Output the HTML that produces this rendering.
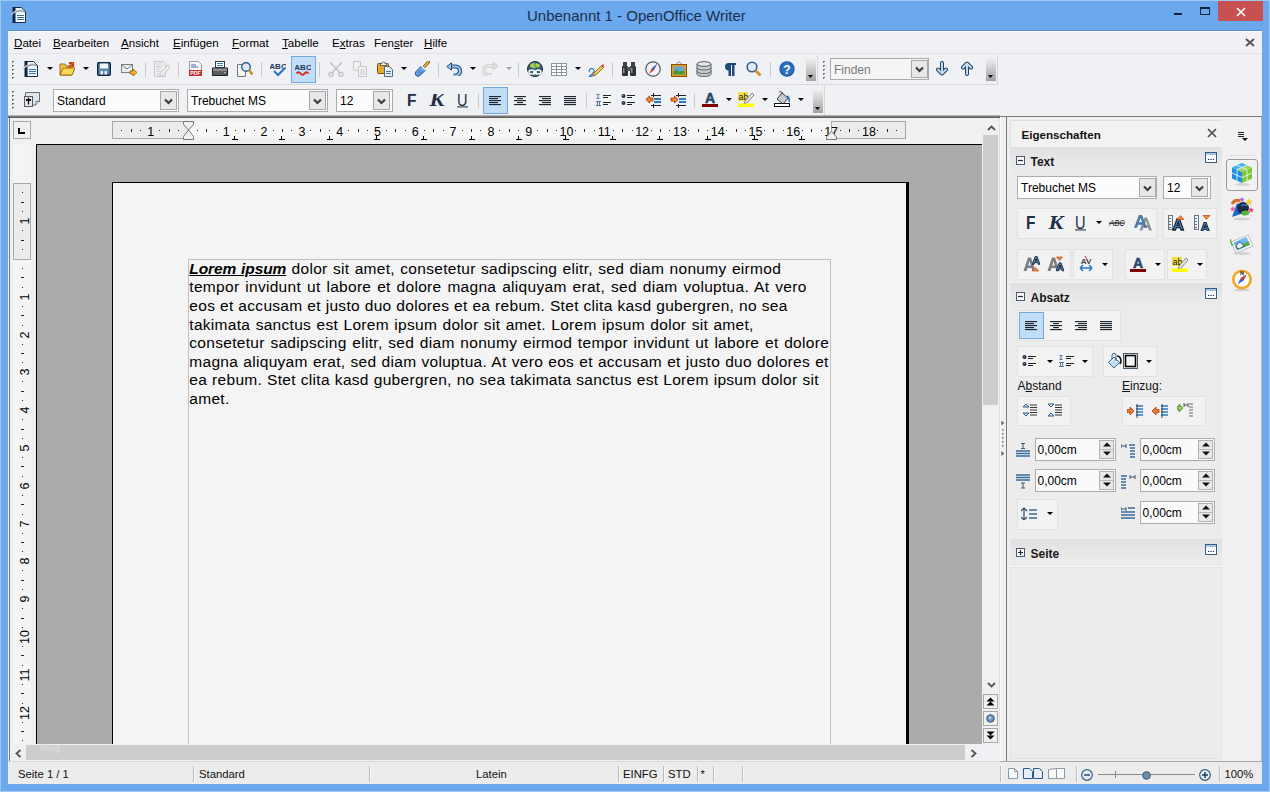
<!DOCTYPE html>
<html><head><meta charset="utf-8"><title>OpenOffice Writer</title>
<style>
*{margin:0;padding:0;box-sizing:border-box}
html,body{width:1270px;height:792px;overflow:hidden}
body{background:#6ba8ee;position:relative;font-family:"Liberation Sans",sans-serif;color:#000}
.a{position:absolute;display:block}
.t{position:absolute;white-space:pre;font-family:"Liberation Sans",sans-serif}
u{text-decoration:underline;text-underline-offset:1px}
</style></head><body>
<div class="a" style="left:0px;top:0px;width:1270px;height:1px;background:#9ec6f3"></div>
<div class="a" style="left:0px;top:0px;width:1px;height:792px;background:#9ec6f3"></div>
<div class="a" style="left:1269px;top:0px;width:1px;height:792px;background:#9ec6f3"></div>
<div class="a" style="left:0px;top:791px;width:1270px;height:1px;background:#9ec6f3"></div>
<div class="t" style="left:527px;top:8.10px;font-size:15px;line-height:15px;color:#1b2f4a">Unbenannt 1 - OpenOffice Writer</div>
<div class="a" style="left:1218px;top:1px;width:45px;height:20px;background:#c75050"></div>
<svg class="a" style="left:1236px;top:7px;" width="10" height="10" viewBox="0 0 10 10"><path d="M1 1L9 9M9 1L1 9" stroke="#fff" stroke-width="1.6"/></svg>
<div class="a" style="left:1174px;top:13px;width:8px;height:2px;background:#0f223d"></div>
<div class="a" style="left:1200px;top:7px;width:10px;height:8px;border:1px solid #0f223d;border-top-width:2px"></div>
<svg class="a" style="left:11px;top:7px;" width="16" height="16" viewBox="0 0 16 16"><path d="M3.5 0.5h7l4 4v11h-11z" fill="#f6f8fa" stroke="#1a2e48"/><rect x="1.5" y="0" width="3" height="16" fill="#0f2440"/><path d="M6 8.5h7M6 10.5h7M6 12.5h7" stroke="#3a70a8"/><path d="M0 8Q5 2 13 3.5" stroke="#c0cad4" stroke-width="1.4" fill="none"/><path d="M5 5Q9 2.5 14 5" stroke="#7a8a9a" stroke-width="1" fill="none"/></svg>
<div class="a" style="left:8px;top:31px;width:1254px;height:753px;background:#f0f1f4"></div>
<div class="a" style="left:8px;top:30px;width:1254px;height:1px;background:#5a8ed0"></div>
<div class="a" style="left:8px;top:31px;width:1254px;height:1px;background:#f8fbfe"></div>
<div class="t" style="left:14px;top:36.78px;font-size:11.6px;line-height:11.6px;color:#000"><u>D</u>atei</div>
<div class="t" style="left:53px;top:36.78px;font-size:11.6px;line-height:11.6px;color:#000"><u>B</u>earbeiten</div>
<div class="t" style="left:121px;top:36.78px;font-size:11.6px;line-height:11.6px;color:#000"><u>A</u>nsicht</div>
<div class="t" style="left:173px;top:36.78px;font-size:11.6px;line-height:11.6px;color:#000"><u>E</u>infügen</div>
<div class="t" style="left:232px;top:36.78px;font-size:11.6px;line-height:11.6px;color:#000"><u>F</u>ormat</div>
<div class="t" style="left:282px;top:36.78px;font-size:11.6px;line-height:11.6px;color:#000"><u>T</u>abelle</div>
<div class="t" style="left:332px;top:36.78px;font-size:11.6px;line-height:11.6px;color:#000">E<u>x</u>tras</div>
<div class="t" style="left:374px;top:36.78px;font-size:11.6px;line-height:11.6px;color:#000">Fen<u>s</u>ter</div>
<div class="t" style="left:424px;top:36.78px;font-size:11.6px;line-height:11.6px;color:#000"><u>H</u>ilfe</div>
<svg class="a" style="left:1245px;top:38px;" width="10" height="9" viewBox="0 0 10 9"><path d="M1 1L9 8M9 1L1 8" stroke="#505050" stroke-width="1.7"/></svg>
<div class="a" style="left:8px;top:53px;width:1254px;height:1px;background:#e2e3e6"></div>
<div class="a" style="left:8px;top:84px;width:990px;height:1px;background:#d6d7da"></div>
<div class="a" style="left:8px;top:115px;width:992px;height:1px;background:#b4b4b4"></div>
<div class="a" style="left:8px;top:116px;width:1254px;height:1px;background:#7a7a7a"></div>
<div class="a" style="left:8px;top:117px;width:992px;height:1px;background:#5e5e5e"></div>
<div class="a" style="left:12px;top:61px;width:2px;height:1px;background:#6a6a6a"></div>
<div class="a" style="left:12px;top:62px;width:1px;height:1px;background:#8a8a8a"></div>
<div class="a" style="left:12px;top:65px;width:2px;height:1px;background:#6a6a6a"></div>
<div class="a" style="left:12px;top:66px;width:1px;height:1px;background:#8a8a8a"></div>
<div class="a" style="left:12px;top:69px;width:2px;height:1px;background:#6a6a6a"></div>
<div class="a" style="left:12px;top:70px;width:1px;height:1px;background:#8a8a8a"></div>
<div class="a" style="left:12px;top:73px;width:2px;height:1px;background:#6a6a6a"></div>
<div class="a" style="left:12px;top:74px;width:1px;height:1px;background:#8a8a8a"></div>
<div class="a" style="left:12px;top:77px;width:2px;height:1px;background:#6a6a6a"></div>
<div class="a" style="left:12px;top:78px;width:1px;height:1px;background:#8a8a8a"></div>
<svg class="a" style="left:23px;top:61px;" width="16" height="16" viewBox="0 0 16 16"><path d="M3.5 0.5h7l4 4v11h-11z" fill="#f6f8fa" stroke="#1a2e48"/><rect x="1.5" y="0" width="3" height="16" fill="#0f2440"/><path d="M6 8.5h7M6 10.5h7M6 12.5h7" stroke="#3a70a8"/><path d="M0 8Q5 2 13 3.5" stroke="#c0cad4" stroke-width="1.4" fill="none"/><path d="M5 5Q9 2.5 14 5" stroke="#7a8a9a" stroke-width="1" fill="none"/></svg>
<svg class="a" style="left:47px;top:67px;" width="6" height="3" viewBox="0 0 6 3"><path d="M0 0h6L3 3z" fill="#000"/></svg>
<svg class="a" style="left:59px;top:61px;" width="16" height="16" viewBox="0 0 16 16"><path d="M1 3h5l1 2h6v9H1z" fill="#f2c84a" stroke="#a06a10" stroke-width="1"/><path d="M1 14l3-7h12l-3 7z" fill="#f8d65a" stroke="#a06a10" stroke-width="1"/><path d="M9 7l5-5M10 2h4v4" stroke="#c33d10" stroke-width="2.2" fill="none"/><path d="M9 7l5-5" stroke="#f07a30" stroke-width="1"/></svg>
<svg class="a" style="left:83px;top:67px;" width="6" height="3" viewBox="0 0 6 3"><path d="M0 0h6L3 3z" fill="#000"/></svg>
<svg class="a" style="left:97px;top:62px;" width="14" height="14" viewBox="0 0 14 14"><rect x="0.7" y="0.7" width="12.6" height="12.6" rx="1" fill="#5d86ad" stroke="#0f2a48" stroke-width="1.4"/><rect x="3" y="1.5" width="8" height="5" fill="#f4f6f8"/><rect x="3.5" y="9" width="2.5" height="3.5" fill="#e8eef4"/><rect x="7.5" y="9" width="2.5" height="3.5" fill="#e8eef4"/></svg>
<svg class="a" style="left:121px;top:64px;" width="16" height="12" viewBox="0 0 16 12"><rect x="0.5" y="0.5" width="11" height="8" fill="#e9edf1" stroke="#7a7f86"/><path d="M1 1l5 4 5-4" stroke="#7a7f86" fill="none"/><path d="M9 7h3V5l4 3.5-4 3.5v-2H9z" fill="#f5b82e" stroke="#8a5a00" stroke-width="0.8"/></svg>
<div class="a" style="left:145px;top:62px;width:1px;height:15px;background:#c9cacc"></div>
<svg class="a" style="left:154px;top:61px;" width="16" height="16" viewBox="0 0 16 16"><path d="M0.5 0.5h9l2 2v13h-11z" fill="#eeeeee" stroke="#c8c8c8"/><path d="M2 3h6M2 5.5h6M2 8h5M2 10.5h5M2 13h4" stroke="#d4d4d4"/><path d="M6 13l8-9 2 2-8 9H6z" fill="#f4f4f4" stroke="#c0c0c0"/></svg>
<div class="a" style="left:178px;top:62px;width:1px;height:15px;background:#c9cacc"></div>
<svg class="a" style="left:189px;top:61px;" width="13" height="15" viewBox="0 0 13 15"><path d="M0.5 0.5h9l3 3v11h-12z" fill="#f8f8f8" stroke="#9a9a9a"/><path d="M2 4h5M2 6h7" stroke="#3a6fb0"/><rect x="0" y="9" width="13" height="6" fill="#c8282a"/><text x="6.5" y="14" font-size="5.2" font-weight="bold" fill="#fff" text-anchor="middle" font-family="Liberation Sans">PDF</text></svg>
<svg class="a" style="left:212px;top:61px;" width="16" height="15" viewBox="0 0 16 15"><rect x="3.5" y="0.5" width="9" height="6" fill="#fff" stroke="#3a3a3a"/><path d="M5 2.5h6M5 4.5h6" stroke="#3a76b8"/><path d="M0.5 7h15v7.5H0.5z" fill="#5a5e62" stroke="#1e2022"/><rect x="1" y="7.5" width="14" height="2.5" fill="#8a8e92"/><rect x="12" y="11" width="2" height="1.2" fill="#7ad07a"/></svg>
<svg class="a" style="left:237px;top:61px;" width="16" height="16" viewBox="0 0 16 16"><path d="M0.5 3.5h8v12h-8z" fill="#f4f4f4" stroke="#787878"/><circle cx="9" cy="6" r="4.3" fill="#dbe9f7" stroke="#2d5d92" stroke-width="1.4"/><path d="M12 9l3.5 4.5" stroke="#c08a20" stroke-width="2.4"/></svg>
<div class="a" style="left:261px;top:62px;width:1px;height:15px;background:#c9cacc"></div>
<svg class="a" style="left:270px;top:61px;" width="16" height="16" viewBox="0 0 16 16"><text x="8" y="7.5" font-size="8" font-weight="bold" fill="#1e3a5f" text-anchor="middle" font-family="Liberation Sans">ABC</text><path d="M4 10l4 4 7-7" stroke="#2a78c8" stroke-width="2.2" fill="none"/></svg>
<div class="a" style="left:291px;top:56px;width:25px;height:27px;background:#c2def7;border:1px solid #72a8de"></div>
<svg class="a" style="left:295px;top:61px;" width="16" height="16" viewBox="0 0 16 16"><text x="8" y="9" font-size="8" font-weight="bold" fill="#1e3a5f" text-anchor="middle" font-family="Liberation Sans">ABC</text><path d="M1.5 12.5q2-2.5 4 0t4 0 4 0" stroke="#d02a1a" stroke-width="2" fill="none"/></svg>
<div class="a" style="left:319px;top:62px;width:1px;height:15px;background:#c9cacc"></div>
<svg class="a" style="left:328px;top:61px;" width="16" height="16" viewBox="0 0 16 16"><path d="M2 1l10 11M14 1L4 12" stroke="#c4c4c4" stroke-width="1.5"/><circle cx="3" cy="13.5" r="2" fill="none" stroke="#c4c4c4" stroke-width="1.4"/><circle cx="13" cy="13.5" r="2" fill="none" stroke="#c4c4c4" stroke-width="1.4"/></svg>
<svg class="a" style="left:353px;top:61px;" width="16" height="16" viewBox="0 0 16 16"><path d="M0.5 0.5h7v9h-7z" fill="#f0f0f0" stroke="#c8c8c8"/><path d="M5.5 5.5h8v10h-8z" fill="#f0f0f0" stroke="#c8c8c8"/><path d="M7 9h5M7 11h5M7 13h5" stroke="#cfcfcf"/></svg>
<svg class="a" style="left:377px;top:61px;" width="16" height="16" viewBox="0 0 16 16"><rect x="0.5" y="2.5" width="11" height="10" rx="1" fill="#e8a830" stroke="#7a5010"/><path d="M3.5 4.5v-2h1.5a1.5 1.5 0 0 1 3 0h1.5v2z" fill="#f4f4f4" stroke="#555" stroke-width="0.9"/><path d="M7.5 5.5h5l3 3v7h-8z" fill="#e8f0f8" stroke="#5a6a7a"/><path d="M9 10.5h5M9 12.5h5" stroke="#3a78c0"/></svg>
<svg class="a" style="left:401px;top:67px;" width="6" height="3" viewBox="0 0 6 3"><path d="M0 0h6L3 3z" fill="#000"/></svg>
<svg class="a" style="left:414px;top:61px;" width="16" height="16" viewBox="0 0 16 16"><path d="M10 6l4.5-5" stroke="#8a5a10" stroke-width="3.2" stroke-linecap="round"/><path d="M10 6l4.5-5" stroke="#e8b040" stroke-width="1.6" stroke-linecap="round"/><path d="M2 10.5l5.5-5.5 4 4-5.5 5.5q-2 1.5-4 0q-1.5-2 0-4z" fill="#6aa8e8" stroke="#1a4a88" stroke-width="1"/><path d="M7.5 5l4 4" stroke="#f4f8fc" stroke-width="1.4"/><path d="M3.5 12l3-3M5 13.5l3-3" stroke="#2a6ab8" stroke-width="0.9"/></svg>
<div class="a" style="left:438px;top:62px;width:1px;height:15px;background:#c9cacc"></div>
<svg class="a" style="left:446px;top:62px;" width="16" height="14" viewBox="0 0 16 14"><path d="M4.5 4.5h5a4.5 4.5 0 0 1 0 9h-2" fill="none" stroke="#1e4f86" stroke-width="4.2" stroke-linejoin="round"/><path d="M4.5 4.5h5a4.5 4.5 0 0 1 0 9h-2" fill="none" stroke="#9cc4ec" stroke-width="2.2"/><path d="M0.8 4.5L5.5 0.8v7.4z" fill="#9cc4ec" stroke="#1e4f86" stroke-width="1" stroke-linejoin="round"/></svg>
<svg class="a" style="left:470px;top:67px;" width="6" height="3" viewBox="0 0 6 3"><path d="M0 0h6L3 3z" fill="#000"/></svg>
<svg class="a" style="left:482px;top:62px;" width="16" height="14" viewBox="0 0 16 14"><path d="M11 4H6a4.5 4.5 0 0 0 0 9h4" fill="none" stroke="#c8c8c8" stroke-width="3.4"/><path d="M11 4H6a4.5 4.5 0 0 0 0 9h4" fill="none" stroke="#efefef" stroke-width="1.6"/><path d="M16 4l-5-4v8z" fill="#e0e0e0" stroke="#c4c4c4" stroke-width="0.8"/></svg>
<svg class="a" style="left:506px;top:67px;" width="6" height="3" viewBox="0 0 6 3"><path d="M0 0h6L3 3z" fill="#a0a0a0"/></svg>
<div class="a" style="left:518px;top:62px;width:1px;height:15px;background:#c9cacc"></div>
<svg class="a" style="left:527px;top:61px;" width="16" height="16" viewBox="0 0 16 16"><circle cx="8" cy="8" r="7.5" fill="#3a6070" stroke="#1a2a38" stroke-width="1"/><path d="M2.5 5q1.5-3 4-3.5l1 2 2.5-1.5 3 2-1 2.5-3-.5-2 1.5-2.5-1z" fill="#a8d040"/><path d="M10 8.5l3.5.5-.5 1.5z" fill="#a8d040"/><path d="M8 1v14" stroke="#4a90c0" stroke-width="0.8"/><rect x="2" y="9.3" width="5.5" height="3.8" rx="1.9" fill="none" stroke="#fff" stroke-width="1.5"/><rect x="8.5" y="9.3" width="5.5" height="3.8" rx="1.9" fill="none" stroke="#fff" stroke-width="1.5"/><path d="M6 11.2h4" stroke="#fff" stroke-width="1.2"/></svg>
<svg class="a" style="left:551px;top:63px;" width="16" height="13" viewBox="0 0 16 13"><rect x="0.5" y="0.5" width="15" height="12" fill="#fff" stroke="#8a96a4"/><path d="M0.5 3.5h15M0.5 6.5h15M0.5 9.5h15M5.5 0.5v12M10.5 0.5v12" stroke="#8a96a4"/></svg>
<svg class="a" style="left:575px;top:67px;" width="6" height="3" viewBox="0 0 6 3"><path d="M0 0h6L3 3z" fill="#000"/></svg>
<svg class="a" style="left:588px;top:61px;" width="16" height="16" viewBox="0 0 16 16"><path d="M1 11q1-5 4-3t-2 6 5-1" fill="none" stroke="#3a7ad0" stroke-width="1.3"/><path d="M6 12l8-8 2 2-8 8-3 1z" fill="#f2c440" stroke="#8a6010" stroke-width="0.8"/><path d="M13 5l2-2 2 2-2 2z" fill="#e05a5a"/></svg>
<div class="a" style="left:612px;top:62px;width:1px;height:15px;background:#c9cacc"></div>
<svg class="a" style="left:621px;top:61px;" width="16" height="16" viewBox="0 0 16 16"><rect x="1" y="5" width="6" height="10" rx="1" fill="#2e3236"/><rect x="9" y="5" width="6" height="10" rx="1" fill="#2e3236"/><rect x="2" y="1" width="4" height="5" fill="#3e4246"/><rect x="10" y="1" width="4" height="5" fill="#3e4246"/><rect x="6" y="6" width="4" height="4" fill="#555"/><rect x="2" y="7" width="1.5" height="5" fill="#8a9096"/><rect x="10" y="7" width="1.5" height="5" fill="#8a9096"/></svg>
<svg class="a" style="left:645px;top:61px;" width="16" height="16" viewBox="0 0 16 16"><circle cx="8" cy="8" r="7.2" fill="#f4f4f4" stroke="#4d5a66" stroke-width="1.2"/><path d="M12 3L9 9 4 13 7 7z" fill="#d83030"/><path d="M12 3L9 9 7 7z" fill="#3a7ad0"/></svg>
<svg class="a" style="left:671px;top:61px;" width="16" height="16" viewBox="0 0 16 16"><rect x="0.5" y="3.5" width="15" height="12" fill="#e89a20" stroke="#8a5200"/><rect x="2.5" y="5.5" width="11" height="8" fill="#5fa8e0"/><path d="M2.5 13.5v-3l3-2 3 2 5-1v4z" fill="#4a9a30"/><path d="M5 3.5L8 0.5l3 3" fill="none" stroke="#888"/></svg>
<svg class="a" style="left:696px;top:61px;" width="16" height="16" viewBox="0 0 16 16"><path d="M1 3v10c0 1.6 3.1 2.5 7 2.5s7-.9 7-2.5V3" fill="#c8ccd0" stroke="#5a5e62"/><ellipse cx="8" cy="3" rx="7" ry="2.3" fill="#e6e8ea" stroke="#5a5e62"/><path d="M1 6.5c0 1.6 3.1 2.5 7 2.5s7-.9 7-2.5M1 10c0 1.6 3.1 2.5 7 2.5s7-.9 7-2.5" fill="none" stroke="#5a5e62"/></svg>
<svg class="a" style="left:722px;top:62px;" width="16" height="14" viewBox="0 0 16 14"><path d="M6 1h8v2h-1.5v11h-2.5V3H9v11H6.5V8.5A3.8 3.8 0 0 1 6 1z" fill="#1f4a78"/></svg>
<svg class="a" style="left:746px;top:61px;" width="16" height="16" viewBox="0 0 16 16"><circle cx="6" cy="6" r="4.8" fill="#e2eef9" stroke="#2f5f94" stroke-width="1.6"/><path d="M9.5 9.5l5 5" stroke="#d09020" stroke-width="2.6"/></svg>
<div class="a" style="left:770px;top:62px;width:1px;height:15px;background:#c9cacc"></div>
<svg class="a" style="left:779px;top:61px;" width="16" height="16" viewBox="0 0 16 16"><circle cx="8" cy="8" r="7.7" fill="#1e5aa8"/><circle cx="8" cy="8" r="6.5" fill="#2f6fc0"/><text x="8" y="12.5" font-size="12" font-weight="bold" fill="#fff" text-anchor="middle" font-family="Liberation Sans">?</text></svg>
<div class="a" style="left:806px;top:57px;width:10px;height:24px;background:linear-gradient(#f4f4f4,#a2a2a2)"></div>
<svg class="a" style="left:808px;top:75px;" width="5" height="3" viewBox="0 0 5 3"><path d="M0 0h5L2.5 3z" fill="#000"/></svg>
<div class="a" style="left:817px;top:55px;width:1px;height:30px;background:#d6d6d6"></div>
<div class="a" style="left:823px;top:61px;width:2px;height:1px;background:#6a6a6a"></div>
<div class="a" style="left:823px;top:62px;width:1px;height:1px;background:#8a8a8a"></div>
<div class="a" style="left:823px;top:65px;width:2px;height:1px;background:#6a6a6a"></div>
<div class="a" style="left:823px;top:66px;width:1px;height:1px;background:#8a8a8a"></div>
<div class="a" style="left:823px;top:69px;width:2px;height:1px;background:#6a6a6a"></div>
<div class="a" style="left:823px;top:70px;width:1px;height:1px;background:#8a8a8a"></div>
<div class="a" style="left:823px;top:73px;width:2px;height:1px;background:#6a6a6a"></div>
<div class="a" style="left:823px;top:74px;width:1px;height:1px;background:#8a8a8a"></div>
<div class="a" style="left:823px;top:77px;width:2px;height:1px;background:#6a6a6a"></div>
<div class="a" style="left:823px;top:78px;width:1px;height:1px;background:#8a8a8a"></div>
<div class="a" style="left:830px;top:58px;width:99px;height:22px;background:#f5f5f5;border:1px solid #acacac"></div>
<div class="t" style="left:834px;top:64.24px;font-size:12px;line-height:12px;color:#7a7a7a">Finden</div>
<div class="a" style="left:911px;top:60px;width:17px;height:18px;background:#e8e8e8;border:1px solid #a9a9a9"></div>
<svg class="a" style="left:915px;top:66px;" width="9" height="7" viewBox="0 0 9 7"><path d="M1 1.5l3.5 3.5 3.5-3.5" stroke="#3c3c3c" stroke-width="2.2" fill="none"/></svg>
<svg class="a" style="left:936px;top:61px;" width="12" height="15" viewBox="0 0 12 15"><path d="M6 2v10.5M2 8.5l4 4 4-4" stroke="#26405e" stroke-width="4" stroke-linecap="round" stroke-linejoin="round" fill="none"/><path d="M6 2v10.5M2 8.5l4 4 4-4" stroke="#c4dcf2" stroke-width="2" stroke-linecap="round" stroke-linejoin="round" fill="none"/></svg>
<svg class="a" style="left:961px;top:61px;" width="12" height="15" viewBox="0 0 12 15"><path d="M6 13V2.5M2 6.5l4-4 4 4" stroke="#26405e" stroke-width="4" stroke-linecap="round" stroke-linejoin="round" fill="none"/><path d="M6 13V2.5M2 6.5l4-4 4 4" stroke="#c4dcf2" stroke-width="2" stroke-linecap="round" stroke-linejoin="round" fill="none"/></svg>
<div class="a" style="left:986px;top:57px;width:10px;height:24px;background:linear-gradient(#f4f4f4,#a2a2a2)"></div>
<svg class="a" style="left:988px;top:75px;" width="5" height="3" viewBox="0 0 5 3"><path d="M0 0h5L2.5 3z" fill="#000"/></svg>
<div class="a" style="left:997px;top:55px;width:1px;height:30px;background:#d6d6d6"></div>
<div class="a" style="left:12px;top:91px;width:2px;height:1px;background:#6a6a6a"></div>
<div class="a" style="left:12px;top:92px;width:1px;height:1px;background:#8a8a8a"></div>
<div class="a" style="left:12px;top:95px;width:2px;height:1px;background:#6a6a6a"></div>
<div class="a" style="left:12px;top:96px;width:1px;height:1px;background:#8a8a8a"></div>
<div class="a" style="left:12px;top:99px;width:2px;height:1px;background:#6a6a6a"></div>
<div class="a" style="left:12px;top:100px;width:1px;height:1px;background:#8a8a8a"></div>
<div class="a" style="left:12px;top:103px;width:2px;height:1px;background:#6a6a6a"></div>
<div class="a" style="left:12px;top:104px;width:1px;height:1px;background:#8a8a8a"></div>
<div class="a" style="left:12px;top:107px;width:2px;height:1px;background:#6a6a6a"></div>
<div class="a" style="left:12px;top:108px;width:1px;height:1px;background:#8a8a8a"></div>
<svg class="a" style="left:24px;top:92px;" width="17" height="16" viewBox="0 0 17 16"><path d="M1.5 0.5h14v9l-3.5 3.5H1.5z" fill="#dde5ee" stroke="#6a6e72"/><path d="M12 13v-3.5h3.5" fill="#fafafa" stroke="#6a6e72"/><rect x="0.5" y="4.5" width="8" height="10" fill="#e4e6e8" stroke="#5a5e62"/><path d="M4.5 5.5v7" stroke="#111" stroke-width="1.3"/><rect x="2" y="7" width="5" height="2" fill="#111"/></svg>
<div class="a" style="left:53px;top:89px;width:126px;height:23px;background:#fcfcfc;border:1px solid #acacac"></div>
<div class="t" style="left:57px;top:95.24px;font-size:12px;line-height:12px;color:#000">Standard</div>
<div class="a" style="left:160px;top:91px;width:17px;height:19px;background:#e8e8e8;border:1px solid #a9a9a9"></div>
<svg class="a" style="left:164px;top:98px;" width="9" height="7" viewBox="0 0 9 7"><path d="M1 1.5l3.5 3.5 3.5-3.5" stroke="#3c3c3c" stroke-width="2.2" fill="none"/></svg>
<div class="a" style="left:187px;top:89px;width:141px;height:23px;background:#fcfcfc;border:1px solid #acacac"></div>
<div class="t" style="left:191px;top:95.24px;font-size:12px;line-height:12px;color:#000">Trebuchet MS</div>
<div class="a" style="left:309px;top:91px;width:17px;height:19px;background:#e8e8e8;border:1px solid #a9a9a9"></div>
<svg class="a" style="left:313px;top:98px;" width="9" height="7" viewBox="0 0 9 7"><path d="M1 1.5l3.5 3.5 3.5-3.5" stroke="#3c3c3c" stroke-width="2.2" fill="none"/></svg>
<div class="a" style="left:336px;top:89px;width:57px;height:23px;background:#fcfcfc;border:1px solid #acacac"></div>
<div class="t" style="left:340px;top:95.24px;font-size:12px;line-height:12px;color:#000">12</div>
<div class="a" style="left:373px;top:91px;width:17px;height:19px;background:#e8e8e8;border:1px solid #a9a9a9"></div>
<svg class="a" style="left:377px;top:98px;" width="9" height="7" viewBox="0 0 9 7"><path d="M1 1.5l3.5 3.5 3.5-3.5" stroke="#3c3c3c" stroke-width="2.2" fill="none"/></svg>
<svg class="a" style="left:407px;top:94px;" width="12" height="15" viewBox="0 0 12 15"><text x="0" y="12" font-size="16.8" font-weight="bold" fill="#1e3048" font-family="Liberation Sans" textLength="9.5" lengthAdjust="spacingAndGlyphs">F</text></svg>
<svg class="a" style="left:429px;top:94px;" width="17" height="15" viewBox="0 0 17 15"><text x="0.5" y="12" font-size="18.3" font-weight="bold" font-style="italic" fill="#1e3048" font-family="Liberation Serif" textLength="15" lengthAdjust="spacingAndGlyphs">K</text></svg>
<svg class="a" style="left:457px;top:94px;" width="12" height="15" viewBox="0 0 12 15"><text x="0" y="12" font-size="16.8" fill="#1e3048" font-family="Liberation Sans" textLength="10.5" lengthAdjust="spacingAndGlyphs">U</text><rect x="0" y="12.3" width="11" height="1.2" fill="#3a4a5a"/></svg>
<div class="a" style="left:478px;top:93px;width:1px;height:15px;background:#c9cacc"></div>
<div class="a" style="left:483px;top:87px;width:25px;height:27px;background:#c2def7;border:1px solid #72a8de"></div>
<svg class="a" style="left:489px;top:96px;" width="12" height="10" viewBox="0 0 12 10"><rect x="0" y="0" width="12" height="1.15" fill="#1e2630"/><rect x="0" y="2" width="9" height="1.15" fill="#1e2630"/><rect x="0" y="4" width="12" height="1.15" fill="#1e2630"/><rect x="0" y="6" width="9" height="1.15" fill="#1e2630"/><rect x="0" y="8" width="12" height="1.15" fill="#1e2630"/></svg>
<svg class="a" style="left:514px;top:96px;" width="12" height="10" viewBox="0 0 12 10"><rect x="0" y="0" width="12" height="1.15" fill="#1e2630"/><rect x="3" y="2" width="6" height="1.15" fill="#1e2630"/><rect x="0" y="4" width="12" height="1.15" fill="#1e2630"/><rect x="3" y="6" width="6" height="1.15" fill="#1e2630"/><rect x="0" y="8" width="12" height="1.15" fill="#1e2630"/></svg>
<svg class="a" style="left:539px;top:96px;" width="12" height="10" viewBox="0 0 12 10"><rect x="0" y="0" width="12" height="1.15" fill="#1e2630"/><rect x="3" y="2" width="9" height="1.15" fill="#1e2630"/><rect x="0" y="4" width="12" height="1.15" fill="#1e2630"/><rect x="3" y="6" width="9" height="1.15" fill="#1e2630"/><rect x="0" y="8" width="12" height="1.15" fill="#1e2630"/></svg>
<svg class="a" style="left:564px;top:96px;" width="12" height="10" viewBox="0 0 12 10"><rect x="0" y="0" width="12" height="1.15" fill="#1e2630"/><rect x="0" y="2" width="12" height="1.15" fill="#1e2630"/><rect x="0" y="4" width="12" height="1.15" fill="#1e2630"/><rect x="0" y="6" width="12" height="1.15" fill="#1e2630"/><rect x="0" y="8" width="12" height="1.15" fill="#1e2630"/></svg>
<div class="a" style="left:586px;top:93px;width:1px;height:15px;background:#c9cacc"></div>
<svg class="a" style="left:595px;top:93px;" width="16" height="13" viewBox="0 0 16 13"><path d="M1.5 1.5h3M3 1.5v3.5M1.5 5.5h3" stroke="#56789a" stroke-width="1" fill="none"/><path d="M1 8.5h5M2.5 8.5v3.5M4.5 8.5v3.5M1 12.5h5" stroke="#56789a" stroke-width="1" fill="none"/><path d="M8 2.5h8M8 4.5h5M8 9.5h8M8 11.5h5" stroke="#202020" stroke-width="1"/></svg>
<svg class="a" style="left:621px;top:93px;" width="16" height="13" viewBox="0 0 16 13"><circle cx="2.5" cy="3" r="2" fill="#1e3048"/><circle cx="2.5" cy="10" r="2" fill="#1e3048"/><circle cx="2.2" cy="2.6" r="0.7" fill="#8aa8c8"/><circle cx="2.2" cy="9.6" r="0.7" fill="#8aa8c8"/><path d="M6 2.5h8M6 4.5h5M6 9.5h8M6 11.5h5" stroke="#202020" stroke-width="1"/></svg>
<svg class="a" style="left:645px;top:92px;" width="16" height="16" viewBox="0 0 16 16"><path d="M0.8 7.5l3.7-3.5v2h3.5v3H4.5v2z" fill="#f08a3a" stroke="#a8400a" stroke-width="0.9" stroke-linejoin="round"/><path d="M6 3.5h10M6 13.5h10M8.5 1v4M8.5 12v4" stroke="#202020" stroke-width="1"/><rect x="9" y="6" width="7" height="2" fill="#2a7ac8"/><rect x="9" y="9" width="7" height="2" fill="#2a7ac8"/></svg>
<svg class="a" style="left:670px;top:92px;" width="16" height="16" viewBox="0 0 16 16"><path d="M8.2 7.5L4.5 4v2H1v3h3.5v2z" fill="#f08a3a" stroke="#a8400a" stroke-width="0.9" stroke-linejoin="round"/><path d="M6 3.5h10M6 13.5h10M8.5 1v4M8.5 12v4" stroke="#202020" stroke-width="1"/><rect x="9" y="6" width="7" height="2" fill="#2a7ac8"/><rect x="9" y="9" width="7" height="2" fill="#2a7ac8"/></svg>
<div class="a" style="left:694px;top:93px;width:1px;height:15px;background:#c9cacc"></div>
<svg class="a" style="left:702px;top:91px;" width="16" height="16" viewBox="0 0 16 16"><text x="8" y="12" font-size="14" font-weight="bold" fill="#2a4e78" text-anchor="middle" font-family="Liberation Sans" stroke="#1a3050" stroke-width="0.5">A</text><rect x="0" y="13" width="16" height="3.2" fill="#800000"/></svg>
<svg class="a" style="left:726px;top:98px;" width="6" height="3" viewBox="0 0 6 3"><path d="M0 0h6L3 3z" fill="#000"/></svg>
<svg class="a" style="left:738px;top:91px;" width="16" height="16" viewBox="0 0 16 16"><rect x="0" y="1" width="10" height="9" fill="#f2e040"/><text x="0.5" y="9" font-size="9" fill="#202020" font-family="Liberation Sans">ab</text><path d="M7 10l7-8 2 2-7 8-3 1z" fill="#e8e8e8" stroke="#6a6a6a" stroke-width="0.8"/><rect x="0" y="12.5" width="16" height="3.5" fill="#ffff00"/></svg>
<svg class="a" style="left:762px;top:98px;" width="6" height="3" viewBox="0 0 6 3"><path d="M0 0h6L3 3z" fill="#000"/></svg>
<svg class="a" style="left:774px;top:91px;" width="16" height="16" viewBox="0 0 16 16"><path d="M3 8l5-6 6 5-5 6z" fill="#c8ccd0" stroke="#3a3e42" stroke-width="1"/><path d="M5 1q3-1 4 2" fill="none" stroke="#555" stroke-width="1.2"/><path d="M13 5q3 2 2 6" stroke="#2a6ac0" stroke-width="1.6" fill="none"/><rect x="0.5" y="12.5" width="15" height="3" fill="#fff" stroke="#111"/></svg>
<svg class="a" style="left:798px;top:98px;" width="6" height="3" viewBox="0 0 6 3"><path d="M0 0h6L3 3z" fill="#000"/></svg>
<div class="a" style="left:813px;top:88px;width:10px;height:25px;background:linear-gradient(#f4f4f4,#a2a2a2)"></div>
<svg class="a" style="left:815px;top:107px;" width="5" height="3" viewBox="0 0 5 3"><path d="M0 0h5L2.5 3z" fill="#000"/></svg>
<div class="a" style="left:824px;top:86px;width:1px;height:29px;background:#d6d6d6"></div>
<div class="a" style="left:8px;top:118px;width:992px;height:26px;background:#f0f0f0"></div>
<div class="a" style="left:9px;top:118px;width:1px;height:643px;background:#777"></div>
<div class="a" style="left:10px;top:118px;width:26px;height:627px;background:#f0f0f0"></div>
<div class="a" style="left:36px;top:144px;width:946px;height:600px;background:#ababab"></div>
<div class="a" style="left:36px;top:144px;width:946px;height:1px;background:#000"></div>
<div class="a" style="left:36px;top:144px;width:1px;height:600px;background:#000"></div>
<div class="a" style="left:112px;top:182px;width:797px;height:562px;background:#f4f4f4;border-left:1px solid #000;border-top:1px solid #000;border-right:3px solid #000"></div>
<div class="a" style="left:188px;top:259px;width:643px;height:486px;border:1px solid #c0c0c0;border-bottom:none"></div>
<div class="a" style="left:13px;top:121px;width:18px;height:18px;background:#f0f0f0;border:1px solid #a8a8a8"></div>
<div class="a" style="left:18px;top:128px;width:2px;height:6px;background:#000"></div>
<div class="a" style="left:18px;top:132px;width:7px;height:2px;background:#000"></div>
<div class="a" style="left:112px;top:121px;width:77px;height:18px;background:#ebebeb;border:1px solid #a8a8a8"></div>
<div class="a" style="left:188px;top:122px;width:643px;height:16px;background:#f6f6f6"></div>
<div class="a" style="left:831px;top:121px;width:75px;height:18px;background:#ebebeb;border:1px solid #a8a8a8"></div>
<div class="a" style="left:121px;top:130px;width:1px;height:1px;background:#222"></div>
<div class="a" style="left:131px;top:129px;width:1px;height:3px;background:#222"></div>
<div class="a" style="left:140px;top:130px;width:1px;height:1px;background:#222"></div>
<div class="t" style="left:140.7px;top:125.6px;width:20px;text-align:center;font-size:12.5px;line-height:12px;color:#000">1</div>
<div class="a" style="left:159px;top:130px;width:1px;height:1px;background:#222"></div>
<div class="a" style="left:169px;top:129px;width:1px;height:3px;background:#222"></div>
<div class="a" style="left:178px;top:130px;width:1px;height:1px;background:#222"></div>
<div class="a" style="left:197px;top:130px;width:1px;height:1px;background:#222"></div>
<div class="a" style="left:206px;top:129px;width:1px;height:3px;background:#222"></div>
<div class="a" style="left:216px;top:130px;width:1px;height:1px;background:#222"></div>
<div class="t" style="left:216.3px;top:125.6px;width:20px;text-align:center;font-size:12.5px;line-height:12px;color:#000">1</div>
<div class="a" style="left:235px;top:130px;width:1px;height:1px;background:#222"></div>
<div class="a" style="left:244px;top:129px;width:1px;height:3px;background:#222"></div>
<div class="a" style="left:254px;top:130px;width:1px;height:1px;background:#222"></div>
<div class="t" style="left:254.1px;top:125.6px;width:20px;text-align:center;font-size:12.5px;line-height:12px;color:#000">2</div>
<div class="a" style="left:273px;top:130px;width:1px;height:1px;background:#222"></div>
<div class="a" style="left:282px;top:129px;width:1px;height:3px;background:#222"></div>
<div class="a" style="left:291px;top:130px;width:1px;height:1px;background:#222"></div>
<div class="t" style="left:291.9px;top:125.6px;width:20px;text-align:center;font-size:12.5px;line-height:12px;color:#000">3</div>
<div class="a" style="left:310px;top:130px;width:1px;height:1px;background:#222"></div>
<div class="a" style="left:320px;top:129px;width:1px;height:3px;background:#222"></div>
<div class="a" style="left:329px;top:130px;width:1px;height:1px;background:#222"></div>
<div class="t" style="left:329.7px;top:125.6px;width:20px;text-align:center;font-size:12.5px;line-height:12px;color:#000">4</div>
<div class="a" style="left:348px;top:130px;width:1px;height:1px;background:#222"></div>
<div class="a" style="left:358px;top:129px;width:1px;height:3px;background:#222"></div>
<div class="a" style="left:367px;top:130px;width:1px;height:1px;background:#222"></div>
<div class="t" style="left:367.5px;top:125.6px;width:20px;text-align:center;font-size:12.5px;line-height:12px;color:#000">5</div>
<div class="a" style="left:386px;top:130px;width:1px;height:1px;background:#222"></div>
<div class="a" style="left:395px;top:129px;width:1px;height:3px;background:#222"></div>
<div class="a" style="left:405px;top:130px;width:1px;height:1px;background:#222"></div>
<div class="t" style="left:405.3px;top:125.6px;width:20px;text-align:center;font-size:12.5px;line-height:12px;color:#000">6</div>
<div class="a" style="left:424px;top:130px;width:1px;height:1px;background:#222"></div>
<div class="a" style="left:433px;top:129px;width:1px;height:3px;background:#222"></div>
<div class="a" style="left:443px;top:130px;width:1px;height:1px;background:#222"></div>
<div class="t" style="left:443.1px;top:125.6px;width:20px;text-align:center;font-size:12.5px;line-height:12px;color:#000">7</div>
<div class="a" style="left:462px;top:130px;width:1px;height:1px;background:#222"></div>
<div class="a" style="left:471px;top:129px;width:1px;height:3px;background:#222"></div>
<div class="a" style="left:480px;top:130px;width:1px;height:1px;background:#222"></div>
<div class="t" style="left:480.9px;top:125.6px;width:20px;text-align:center;font-size:12.5px;line-height:12px;color:#000">8</div>
<div class="a" style="left:499px;top:130px;width:1px;height:1px;background:#222"></div>
<div class="a" style="left:509px;top:129px;width:1px;height:3px;background:#222"></div>
<div class="a" style="left:518px;top:130px;width:1px;height:1px;background:#222"></div>
<div class="t" style="left:518.7px;top:125.6px;width:20px;text-align:center;font-size:12.5px;line-height:12px;color:#000">9</div>
<div class="a" style="left:537px;top:130px;width:1px;height:1px;background:#222"></div>
<div class="a" style="left:547px;top:129px;width:1px;height:3px;background:#222"></div>
<div class="a" style="left:556px;top:130px;width:1px;height:1px;background:#222"></div>
<div class="t" style="left:556.5px;top:125.6px;width:20px;text-align:center;font-size:12.5px;line-height:12px;color:#000">10</div>
<div class="a" style="left:575px;top:130px;width:1px;height:1px;background:#222"></div>
<div class="a" style="left:584px;top:129px;width:1px;height:3px;background:#222"></div>
<div class="a" style="left:594px;top:130px;width:1px;height:1px;background:#222"></div>
<div class="t" style="left:594.3px;top:125.6px;width:20px;text-align:center;font-size:12.5px;line-height:12px;color:#000">11</div>
<div class="a" style="left:613px;top:130px;width:1px;height:1px;background:#222"></div>
<div class="a" style="left:622px;top:129px;width:1px;height:3px;background:#222"></div>
<div class="a" style="left:632px;top:130px;width:1px;height:1px;background:#222"></div>
<div class="t" style="left:632.1px;top:125.6px;width:20px;text-align:center;font-size:12.5px;line-height:12px;color:#000">12</div>
<div class="a" style="left:651px;top:130px;width:1px;height:1px;background:#222"></div>
<div class="a" style="left:660px;top:129px;width:1px;height:3px;background:#222"></div>
<div class="a" style="left:669px;top:130px;width:1px;height:1px;background:#222"></div>
<div class="t" style="left:669.9px;top:125.6px;width:20px;text-align:center;font-size:12.5px;line-height:12px;color:#000">13</div>
<div class="a" style="left:688px;top:130px;width:1px;height:1px;background:#222"></div>
<div class="a" style="left:698px;top:129px;width:1px;height:3px;background:#222"></div>
<div class="a" style="left:707px;top:130px;width:1px;height:1px;background:#222"></div>
<div class="t" style="left:707.7px;top:125.6px;width:20px;text-align:center;font-size:12.5px;line-height:12px;color:#000">14</div>
<div class="a" style="left:726px;top:130px;width:1px;height:1px;background:#222"></div>
<div class="a" style="left:736px;top:129px;width:1px;height:3px;background:#222"></div>
<div class="a" style="left:745px;top:130px;width:1px;height:1px;background:#222"></div>
<div class="t" style="left:745.5px;top:125.6px;width:20px;text-align:center;font-size:12.5px;line-height:12px;color:#000">15</div>
<div class="a" style="left:764px;top:130px;width:1px;height:1px;background:#222"></div>
<div class="a" style="left:773px;top:129px;width:1px;height:3px;background:#222"></div>
<div class="a" style="left:783px;top:130px;width:1px;height:1px;background:#222"></div>
<div class="t" style="left:783.3px;top:125.6px;width:20px;text-align:center;font-size:12.5px;line-height:12px;color:#000">16</div>
<div class="a" style="left:802px;top:130px;width:1px;height:1px;background:#222"></div>
<div class="a" style="left:811px;top:129px;width:1px;height:3px;background:#222"></div>
<div class="a" style="left:821px;top:130px;width:1px;height:1px;background:#222"></div>
<div class="t" style="left:821.1px;top:125.6px;width:20px;text-align:center;font-size:12.5px;line-height:12px;color:#000">17</div>
<div class="a" style="left:840px;top:130px;width:1px;height:1px;background:#222"></div>
<div class="a" style="left:849px;top:129px;width:1px;height:3px;background:#222"></div>
<div class="a" style="left:858px;top:130px;width:1px;height:1px;background:#222"></div>
<div class="t" style="left:858.9px;top:125.6px;width:20px;text-align:center;font-size:12.5px;line-height:12px;color:#000">18</div>
<div class="a" style="left:877px;top:130px;width:1px;height:1px;background:#222"></div>
<div class="a" style="left:887px;top:129px;width:1px;height:3px;background:#222"></div>
<div class="a" style="left:896px;top:130px;width:1px;height:1px;background:#222"></div>
<div class="a" style="left:232px;top:139px;width:6px;height:1px;background:#000"></div>
<div class="a" style="left:234px;top:136px;width:1px;height:3px;background:#000"></div>
<div class="a" style="left:279px;top:139px;width:6px;height:1px;background:#000"></div>
<div class="a" style="left:281px;top:136px;width:1px;height:3px;background:#000"></div>
<div class="a" style="left:327px;top:139px;width:6px;height:1px;background:#000"></div>
<div class="a" style="left:329px;top:136px;width:1px;height:3px;background:#000"></div>
<div class="a" style="left:374px;top:139px;width:6px;height:1px;background:#000"></div>
<div class="a" style="left:376px;top:136px;width:1px;height:3px;background:#000"></div>
<div class="a" style="left:421px;top:139px;width:6px;height:1px;background:#000"></div>
<div class="a" style="left:423px;top:136px;width:1px;height:3px;background:#000"></div>
<div class="a" style="left:469px;top:139px;width:6px;height:1px;background:#000"></div>
<div class="a" style="left:471px;top:136px;width:1px;height:3px;background:#000"></div>
<div class="a" style="left:516px;top:139px;width:6px;height:1px;background:#000"></div>
<div class="a" style="left:518px;top:136px;width:1px;height:3px;background:#000"></div>
<div class="a" style="left:563px;top:139px;width:6px;height:1px;background:#000"></div>
<div class="a" style="left:565px;top:136px;width:1px;height:3px;background:#000"></div>
<div class="a" style="left:610px;top:139px;width:6px;height:1px;background:#000"></div>
<div class="a" style="left:612px;top:136px;width:1px;height:3px;background:#000"></div>
<div class="a" style="left:657px;top:139px;width:6px;height:1px;background:#000"></div>
<div class="a" style="left:659px;top:136px;width:1px;height:3px;background:#000"></div>
<div class="a" style="left:705px;top:139px;width:6px;height:1px;background:#000"></div>
<div class="a" style="left:707px;top:136px;width:1px;height:3px;background:#000"></div>
<div class="a" style="left:752px;top:139px;width:6px;height:1px;background:#000"></div>
<div class="a" style="left:754px;top:136px;width:1px;height:3px;background:#000"></div>
<div class="a" style="left:799px;top:139px;width:6px;height:1px;background:#000"></div>
<div class="a" style="left:801px;top:136px;width:1px;height:3px;background:#000"></div>
<svg class="a" style="left:183px;top:121px;" width="12" height="19" viewBox="0 0 12 19"><path d="M0.5 0.5h10v3L5.5 9 0.5 3.5z" fill="#f0f0f0" stroke="#777"/><path d="M0.5 18.5h10v-3L5.5 9 0.5 15.5z" fill="#f0f0f0" stroke="#777"/></svg>
<svg class="a" style="left:826px;top:131px;" width="11" height="9" viewBox="0 0 11 9"><path d="M0.5 8.5h10v-2.5L5.5 0.5 0.5 6z" fill="#f0f0f0" stroke="#777"/></svg>
<div class="a" style="left:13px;top:144px;width:18px;height:600px;background:#f4f4f4"></div>
<div class="a" style="left:13px;top:183px;width:18px;height:77px;background:#ebebeb;border:1px solid #a8a8a8"></div>
<div class="a" style="left:22px;top:192px;width:1px;height:1px;background:#222"></div>
<div class="a" style="left:21px;top:202px;width:3px;height:1px;background:#222"></div>
<div class="a" style="left:22px;top:211px;width:1px;height:1px;background:#222"></div>
<div class="t" style="left:15px;top:215.2px;width:20px;height:12px;text-align:center;font-size:12.5px;line-height:12px;color:#000;transform:rotate(-90deg)">1</div>
<div class="a" style="left:22px;top:230px;width:1px;height:1px;background:#222"></div>
<div class="a" style="left:21px;top:240px;width:3px;height:1px;background:#222"></div>
<div class="a" style="left:22px;top:249px;width:1px;height:1px;background:#222"></div>
<div class="a" style="left:22px;top:268px;width:1px;height:1px;background:#222"></div>
<div class="a" style="left:21px;top:277px;width:3px;height:1px;background:#222"></div>
<div class="a" style="left:22px;top:287px;width:1px;height:1px;background:#222"></div>
<div class="t" style="left:15px;top:290.8px;width:20px;height:12px;text-align:center;font-size:12.5px;line-height:12px;color:#000;transform:rotate(-90deg)">1</div>
<div class="a" style="left:22px;top:306px;width:1px;height:1px;background:#222"></div>
<div class="a" style="left:21px;top:315px;width:3px;height:1px;background:#222"></div>
<div class="a" style="left:22px;top:325px;width:1px;height:1px;background:#222"></div>
<div class="t" style="left:15px;top:328.6px;width:20px;height:12px;text-align:center;font-size:12.5px;line-height:12px;color:#000;transform:rotate(-90deg)">2</div>
<div class="a" style="left:22px;top:344px;width:1px;height:1px;background:#222"></div>
<div class="a" style="left:21px;top:353px;width:3px;height:1px;background:#222"></div>
<div class="a" style="left:22px;top:362px;width:1px;height:1px;background:#222"></div>
<div class="t" style="left:15px;top:366.4px;width:20px;height:12px;text-align:center;font-size:12.5px;line-height:12px;color:#000;transform:rotate(-90deg)">3</div>
<div class="a" style="left:22px;top:381px;width:1px;height:1px;background:#222"></div>
<div class="a" style="left:21px;top:391px;width:3px;height:1px;background:#222"></div>
<div class="a" style="left:22px;top:400px;width:1px;height:1px;background:#222"></div>
<div class="t" style="left:15px;top:404.2px;width:20px;height:12px;text-align:center;font-size:12.5px;line-height:12px;color:#000;transform:rotate(-90deg)">4</div>
<div class="a" style="left:22px;top:419px;width:1px;height:1px;background:#222"></div>
<div class="a" style="left:21px;top:429px;width:3px;height:1px;background:#222"></div>
<div class="a" style="left:22px;top:438px;width:1px;height:1px;background:#222"></div>
<div class="t" style="left:15px;top:442.0px;width:20px;height:12px;text-align:center;font-size:12.5px;line-height:12px;color:#000;transform:rotate(-90deg)">5</div>
<div class="a" style="left:22px;top:457px;width:1px;height:1px;background:#222"></div>
<div class="a" style="left:21px;top:466px;width:3px;height:1px;background:#222"></div>
<div class="a" style="left:22px;top:476px;width:1px;height:1px;background:#222"></div>
<div class="t" style="left:15px;top:479.8px;width:20px;height:12px;text-align:center;font-size:12.5px;line-height:12px;color:#000;transform:rotate(-90deg)">6</div>
<div class="a" style="left:22px;top:495px;width:1px;height:1px;background:#222"></div>
<div class="a" style="left:21px;top:504px;width:3px;height:1px;background:#222"></div>
<div class="a" style="left:22px;top:514px;width:1px;height:1px;background:#222"></div>
<div class="t" style="left:15px;top:517.6px;width:20px;height:12px;text-align:center;font-size:12.5px;line-height:12px;color:#000;transform:rotate(-90deg)">7</div>
<div class="a" style="left:22px;top:533px;width:1px;height:1px;background:#222"></div>
<div class="a" style="left:21px;top:542px;width:3px;height:1px;background:#222"></div>
<div class="a" style="left:22px;top:551px;width:1px;height:1px;background:#222"></div>
<div class="t" style="left:15px;top:555.4px;width:20px;height:12px;text-align:center;font-size:12.5px;line-height:12px;color:#000;transform:rotate(-90deg)">8</div>
<div class="a" style="left:22px;top:570px;width:1px;height:1px;background:#222"></div>
<div class="a" style="left:21px;top:580px;width:3px;height:1px;background:#222"></div>
<div class="a" style="left:22px;top:589px;width:1px;height:1px;background:#222"></div>
<div class="t" style="left:15px;top:593.2px;width:20px;height:12px;text-align:center;font-size:12.5px;line-height:12px;color:#000;transform:rotate(-90deg)">9</div>
<div class="a" style="left:22px;top:608px;width:1px;height:1px;background:#222"></div>
<div class="a" style="left:21px;top:618px;width:3px;height:1px;background:#222"></div>
<div class="a" style="left:22px;top:627px;width:1px;height:1px;background:#222"></div>
<div class="t" style="left:15px;top:631.0px;width:20px;height:12px;text-align:center;font-size:12.5px;line-height:12px;color:#000;transform:rotate(-90deg)">10</div>
<div class="a" style="left:22px;top:646px;width:1px;height:1px;background:#222"></div>
<div class="a" style="left:21px;top:655px;width:3px;height:1px;background:#222"></div>
<div class="a" style="left:22px;top:665px;width:1px;height:1px;background:#222"></div>
<div class="t" style="left:15px;top:668.8px;width:20px;height:12px;text-align:center;font-size:12.5px;line-height:12px;color:#000;transform:rotate(-90deg)">11</div>
<div class="a" style="left:22px;top:684px;width:1px;height:1px;background:#222"></div>
<div class="a" style="left:21px;top:693px;width:3px;height:1px;background:#222"></div>
<div class="a" style="left:22px;top:703px;width:1px;height:1px;background:#222"></div>
<div class="t" style="left:15px;top:706.6px;width:20px;height:12px;text-align:center;font-size:12.5px;line-height:12px;color:#000;transform:rotate(-90deg)">12</div>
<div class="a" style="left:22px;top:722px;width:1px;height:1px;background:#222"></div>
<div class="a" style="left:21px;top:731px;width:3px;height:1px;background:#222"></div>
<div class="a" style="left:22px;top:740px;width:1px;height:1px;background:#222"></div>
<div class="t" style="left:189.3px;top:260.88px;width:591.8px;font-size:15.5px;line-height:15.5px;letter-spacing:0.3px;text-align:justify;text-align-last:justify;color:#000;white-space:normal"><b style="letter-spacing:-0.1px"><i><u>Lorem ipsum</u></i></b> dolor sit amet, consetetur sadipscing elitr, sed diam nonumy eirmod</div>
<div class="t" style="left:189.3px;top:279.48px;width:617.3px;font-size:15.5px;line-height:15.5px;letter-spacing:0.3px;text-align:justify;text-align-last:justify;color:#000;white-space:normal">tempor invidunt ut labore et dolore magna aliquyam erat, sed diam voluptua. At vero</div>
<div class="t" style="left:189.3px;top:298.08px;width:598.3px;font-size:15.5px;line-height:15.5px;letter-spacing:0.3px;text-align:justify;text-align-last:justify;color:#000;white-space:normal">eos et accusam et justo duo dolores et ea rebum. Stet clita kasd gubergren, no sea</div>
<div class="t" style="left:189.3px;top:316.68px;width:564.4px;font-size:15.5px;line-height:15.5px;letter-spacing:0.3px;text-align:justify;text-align-last:justify;color:#000;white-space:normal">takimata sanctus est Lorem ipsum dolor sit amet. Lorem ipsum dolor sit amet,</div>
<div class="t" style="left:189.3px;top:335.28px;width:639.8px;font-size:15.5px;line-height:15.5px;letter-spacing:0.3px;text-align:justify;text-align-last:justify;color:#000;white-space:normal">consetetur sadipscing elitr, sed diam nonumy eirmod tempor invidunt ut labore et dolore</div>
<div class="t" style="left:189.3px;top:353.88px;width:639.4px;font-size:15.5px;line-height:15.5px;letter-spacing:0.3px;text-align:justify;text-align-last:justify;color:#000;white-space:normal">magna aliquyam erat, sed diam voluptua. At vero eos et accusam et justo duo dolores et</div>
<div class="t" style="left:189.3px;top:372.48px;width:629.5px;font-size:15.5px;line-height:15.5px;letter-spacing:0.3px;text-align:justify;text-align-last:justify;color:#000;white-space:normal">ea rebum. Stet clita kasd gubergren, no sea takimata sanctus est Lorem ipsum dolor sit</div>
<div class="t" style="left:189.3px;top:391.08px;width:42.1px;font-size:15.5px;line-height:15.5px;letter-spacing:0.3px;text-align:justify;text-align-last:left;color:#000;white-space:normal">amet.</div>
<div class="a" style="left:982px;top:118px;width:17px;height:626px;background:#f0f0f0"></div>
<div class="a" style="left:983px;top:135px;width:15px;height:270px;background:#cdcdcd"></div>
<div class="a" style="left:999px;top:118px;width:1px;height:626px;background:#dedede"></div>
<div class="a" style="left:10px;top:744px;width:973px;height:17px;background:#f0f0f0"></div>
<div class="a" style="left:26px;top:745px;width:939px;height:15px;background:#cdcdcd"></div>
<div class="a" style="left:1001px;top:117px;width:5px;height:645px;background:#f0f0f0"></div>
<div class="a" style="left:1000px;top:117px;width:1px;height:645px;background:#fafafa"></div>
<div class="a" style="left:1006px;top:117px;width:1px;height:645px;background:#7a7a7a"></div>
<div class="a" style="left:1007px;top:117px;width:215px;height:645px;background:#eeeeee"></div>
<div class="a" style="left:1010px;top:120px;width:212px;height:27px;background:#f2f2f2;border-top:1px solid #dedede;border-left:1px solid #dedede"></div>
<div class="t" style="left:1021.5px;top:128.88px;font-size:11.6px;line-height:11.6px;font-weight:bold;color:#111">Eigenschaften</div>
<svg class="a" style="left:1207px;top:128px;" width="10" height="10" viewBox="0 0 10 10"><path d="M1 1l8 8M9 1l-8 8" stroke="#505050" stroke-width="1.7"/></svg>
<div class="a" style="left:1010px;top:147px;width:212px;height:136px;background:#ececec"></div>
<div class="a" style="left:1010px;top:147px;width:212px;height:28px;background:linear-gradient(#e0e0e0,#e9e9e9 60%,#ececec)"></div>
<svg class="a" style="left:1016px;top:156px;" width="9" height="9" viewBox="0 0 9 9"><rect x="0.5" y="0.5" width="8" height="8" fill="#f8fafc" stroke="#4a5a6a"/><path d="M2 4.5h5" stroke="#1a2a3a" stroke-width="1.2"/></svg>
<div class="t" style="left:1030.5px;top:156.34px;font-size:12px;line-height:12px;font-weight:bold;color:#1a1a1a">Text</div>
<svg class="a" style="left:1205px;top:152px;" width="12" height="11" viewBox="0 0 12 11"><rect x="0.5" y="0.5" width="11" height="10" fill="#fafcfe" stroke="#3a5a80"/><rect x="1" y="1" width="10" height="2" fill="#9cc4ec"/><path d="M3 7.5h1.2M5.4 7.5h1.2M7.8 7.5h1.2" stroke="#1a2a48"/></svg>
<div class="a" style="left:1017px;top:176px;width:140px;height:23px;background:#fcfcfc;border:1px solid #acacac"></div>
<div class="t" style="left:1021px;top:182.24px;font-size:12px;line-height:12px;color:#000">Trebuchet MS</div>
<div class="a" style="left:1139px;top:178px;width:17px;height:19px;background:#e8e8e8;border:1px solid #a9a9a9"></div>
<svg class="a" style="left:1143px;top:185px;" width="9" height="7" viewBox="0 0 9 7"><path d="M1 1.5l3.5 3.5 3.5-3.5" stroke="#3c3c3c" stroke-width="2.2" fill="none"/></svg>
<div class="a" style="left:1163px;top:176px;width:48px;height:23px;background:#fcfcfc;border:1px solid #acacac"></div>
<div class="t" style="left:1167px;top:182.24px;font-size:12px;line-height:12px;color:#000">12</div>
<div class="a" style="left:1191px;top:178px;width:17px;height:19px;background:#e8e8e8;border:1px solid #a9a9a9"></div>
<svg class="a" style="left:1195px;top:185px;" width="9" height="7" viewBox="0 0 9 7"><path d="M1 1.5l3.5 3.5 3.5-3.5" stroke="#3c3c3c" stroke-width="2.2" fill="none"/></svg>
<div class="a" style="left:1017px;top:208px;width:140px;height:31px;background:#f2f2f2;border:1px solid #e2e2e2;border-radius:1px"></div>
<div class="a" style="left:1163px;top:208px;width:54px;height:31px;background:#f2f2f2;border:1px solid #e2e2e2;border-radius:1px"></div>
<svg class="a" style="left:1026px;top:216px;" width="12" height="16" viewBox="0 0 12 16"><text x="0" y="13" font-size="18.2" font-weight="bold" fill="#1e3048" font-family="Liberation Sans" textLength="9.5" lengthAdjust="spacingAndGlyphs">F</text></svg>
<svg class="a" style="left:1048px;top:216px;" width="17" height="16" viewBox="0 0 17 16"><text x="0.5" y="13" font-size="19.8" font-weight="bold" font-style="italic" fill="#1e3048" font-family="Liberation Serif" textLength="15" lengthAdjust="spacingAndGlyphs">K</text></svg>
<svg class="a" style="left:1075px;top:216px;" width="12" height="16" viewBox="0 0 12 16"><text x="0" y="13" font-size="18.2" fill="#1e3048" font-family="Liberation Sans" textLength="10.5" lengthAdjust="spacingAndGlyphs">U</text><rect x="0" y="13.3" width="11" height="1.2" fill="#3a4a5a"/></svg>
<svg class="a" style="left:1096px;top:221px;" width="6" height="3" viewBox="0 0 6 3"><path d="M0 0h6L3 3z" fill="#000"/></svg>
<svg class="a" style="left:1109px;top:216px;" width="16" height="12" viewBox="0 0 16 12"><text x="8" y="10" font-size="8.5" font-style="italic" fill="#2a2a2a" text-anchor="middle" font-family="Liberation Sans" textLength="15.5" lengthAdjust="spacingAndGlyphs">ABC</text><rect x="0" y="6.5" width="16" height="1.1" fill="#1a1a1a"/></svg>
<svg class="a" style="left:1134px;top:215px;" width="18" height="17" viewBox="0 0 18 17"><path d="M5.5 15.5L10.5 2.5h2.5l5 13h-3l-1-3h-4.5l-1 3z M10.5 10h3l-1.5-4.3z" fill="#909498" fill-rule="evenodd"/><path d="M0 12.7L5 0h3l5 12.7h-3l-1-3H4l-1 3z M4.8 7.3h3.4L6.5 2.8z" fill="#4a7aa8" fill-rule="evenodd"/></svg>
<svg class="a" style="left:1168px;top:215px;" width="17" height="16" viewBox="0 0 17 16"><rect x="0.5" y="0.5" width="4" height="14" fill="#eef2f6" stroke="#6a7480"/><path d="M1 3.5h2M1 6.5h2M1 9.5h2M1 12.5h2" stroke="#6a7480"/><g transform="translate(4.5,3.5)"><path d="M0.5 11.5L4.5 0.5h2.5l4 11h-2.5l-0.8-2.4H3.8L3 11.5z M4.5 7h2.5L5.75 3.4z" fill="#5a88b8" stroke="#14283e" stroke-width="1.3" fill-rule="evenodd"/></g><path d="M9 4.5l3.5-4 3.5 4z" fill="#f08a3a" stroke="#b84a10" stroke-width="0.7"/></svg>
<svg class="a" style="left:1194px;top:215px;" width="17" height="16" viewBox="0 0 17 16"><rect x="0.5" y="0.5" width="4" height="14" fill="#eef2f6" stroke="#6a7480"/><path d="M1 3.5h2M1 6.5h2M1 9.5h2M1 12.5h2" stroke="#6a7480"/><g transform="translate(6.5,7) scale(0.8)"><path d="M0.5 11.5L4.5 0.5h2.5l4 11h-2.5l-0.8-2.4H3.8L3 11.5z M4.5 7h2.5L5.75 3.4z" fill="#5a88b8" stroke="#14283e" stroke-width="1.3" fill-rule="evenodd"/></g><path d="M9 0.5h7l-3.5 3.8z" fill="#f08a3a" stroke="#b84a10" stroke-width="0.7"/></svg>
<div class="a" style="left:1017px;top:249px;width:54px;height:31px;background:#f2f2f2;border:1px solid #e2e2e2;border-radius:1px"></div>
<div class="a" style="left:1073px;top:249px;width:40px;height:31px;background:#f2f2f2;border:1px solid #e2e2e2;border-radius:1px"></div>
<div class="a" style="left:1125px;top:249px;width:40px;height:31px;background:#f2f2f2;border:1px solid #e2e2e2;border-radius:1px"></div>
<div class="a" style="left:1167px;top:249px;width:40px;height:31px;background:#f2f2f2;border:1px solid #e2e2e2;border-radius:1px"></div>
<svg class="a" style="left:1023px;top:256px;" width="17" height="16" viewBox="0 0 17 16"><path d="M0.5 15L5 1.5h3L12.5 15h-3l-1-3H4.5l-1 3z M5.2 9.5h2.6L6.5 5z" fill="#7a7e84" fill-rule="evenodd"/><g transform="translate(9,0) scale(0.72)"><path d="M0.5 11.5L4.5 0.5h2.5l4 11h-2.5l-0.8-2.4H3.8L3 11.5z M4.5 7h2.5L5.75 3.4z" fill="#5a88b8" stroke="#14283e" stroke-width="1.3" fill-rule="evenodd"/></g><path d="M9.5 15l3-3.5 3 3.5z" fill="#f08a3a" stroke="#b84a10" stroke-width="0.7"/></svg>
<svg class="a" style="left:1047px;top:256px;" width="17" height="16" viewBox="0 0 17 16"><path d="M0.5 15L5 1.5h3L12.5 15h-3l-1-3H4.5l-1 3z M5.2 9.5h2.6L6.5 5z" fill="#7a7e84" fill-rule="evenodd"/><g transform="translate(9,6.5) scale(0.72)"><path d="M0.5 11.5L4.5 0.5h2.5l4 11h-2.5l-0.8-2.4H3.8L3 11.5z M4.5 7h2.5L5.75 3.4z" fill="#5a88b8" stroke="#14283e" stroke-width="1.3" fill-rule="evenodd"/></g><path d="M9.5 1h6l-3 3.5z" fill="#f08a3a" stroke="#b84a10" stroke-width="0.7"/></svg>
<svg class="a" style="left:1078px;top:256px;" width="16" height="16" viewBox="0 0 16 16"><text x="8" y="8" font-size="8" font-weight="bold" fill="#3a4a5a" text-anchor="middle" font-family="Liberation Sans">AV</text><path d="M7 0l4 8" stroke="#d02a2a" stroke-width="1"/><path d="M2 12h12M2 12l3-3M2 12l3 3M14 12l-3-3M14 12l-3 3" stroke="#2a78c8" stroke-width="1.5" fill="none"/></svg>
<svg class="a" style="left:1102px;top:263px;" width="6" height="3" viewBox="0 0 6 3"><path d="M0 0h6L3 3z" fill="#000"/></svg>
<svg class="a" style="left:1130px;top:256px;" width="16" height="16" viewBox="0 0 16 16"><text x="8" y="12" font-size="14" font-weight="bold" fill="#2a4e78" text-anchor="middle" font-family="Liberation Sans" stroke="#1a3050" stroke-width="0.5">A</text><rect x="0" y="13" width="16" height="3.2" fill="#800000"/></svg>
<svg class="a" style="left:1155px;top:263px;" width="6" height="3" viewBox="0 0 6 3"><path d="M0 0h6L3 3z" fill="#000"/></svg>
<svg class="a" style="left:1172px;top:256px;" width="16" height="16" viewBox="0 0 16 16"><rect x="0" y="1" width="10" height="9" fill="#f2e040"/><text x="0.5" y="9" font-size="9" fill="#202020" font-family="Liberation Sans">ab</text><path d="M7 10l7-8 2 2-7 8-3 1z" fill="#e8e8e8" stroke="#6a6a6a" stroke-width="0.8"/><rect x="0" y="12.5" width="16" height="3.5" fill="#ffff00"/></svg>
<svg class="a" style="left:1197px;top:263px;" width="6" height="3" viewBox="0 0 6 3"><path d="M0 0h6L3 3z" fill="#000"/></svg>
<div class="a" style="left:1010px;top:282px;width:212px;height:1px;background:#f6f6f6"></div>
<div class="a" style="left:1010px;top:283px;width:212px;height:256px;background:#ececec"></div>
<div class="a" style="left:1010px;top:283px;width:212px;height:27px;background:linear-gradient(#e0e0e0,#e9e9e9 60%,#ececec)"></div>
<svg class="a" style="left:1016px;top:292px;" width="9" height="9" viewBox="0 0 9 9"><rect x="0.5" y="0.5" width="8" height="8" fill="#f8fafc" stroke="#4a5a6a"/><path d="M2 4.5h5" stroke="#1a2a3a" stroke-width="1.2"/></svg>
<div class="t" style="left:1030.5px;top:292.34px;font-size:12px;line-height:12px;font-weight:bold;color:#1a1a1a">Absatz</div>
<svg class="a" style="left:1205px;top:288px;" width="12" height="11" viewBox="0 0 12 11"><rect x="0.5" y="0.5" width="11" height="10" fill="#fafcfe" stroke="#3a5a80"/><rect x="1" y="1" width="10" height="2" fill="#9cc4ec"/><path d="M3 7.5h1.2M5.4 7.5h1.2M7.8 7.5h1.2" stroke="#1a2a48"/></svg>
<div class="a" style="left:1017px;top:310px;width:104px;height:31px;background:#f2f2f2;border:1px solid #e2e2e2;border-radius:1px"></div>
<div class="a" style="left:1019px;top:312px;width:25px;height:27px;background:#c2def7;border:1px solid #72a8de"></div>
<svg class="a" style="left:1025px;top:321px;" width="12" height="10" viewBox="0 0 12 10"><rect x="0" y="0" width="12" height="1.15" fill="#1e2630"/><rect x="0" y="2" width="9" height="1.15" fill="#1e2630"/><rect x="0" y="4" width="12" height="1.15" fill="#1e2630"/><rect x="0" y="6" width="9" height="1.15" fill="#1e2630"/><rect x="0" y="8" width="12" height="1.15" fill="#1e2630"/></svg>
<svg class="a" style="left:1050px;top:321px;" width="12" height="10" viewBox="0 0 12 10"><rect x="0" y="0" width="12" height="1.15" fill="#1e2630"/><rect x="3" y="2" width="6" height="1.15" fill="#1e2630"/><rect x="0" y="4" width="12" height="1.15" fill="#1e2630"/><rect x="3" y="6" width="6" height="1.15" fill="#1e2630"/><rect x="0" y="8" width="12" height="1.15" fill="#1e2630"/></svg>
<svg class="a" style="left:1075px;top:321px;" width="12" height="10" viewBox="0 0 12 10"><rect x="0" y="0" width="12" height="1.15" fill="#1e2630"/><rect x="3" y="2" width="9" height="1.15" fill="#1e2630"/><rect x="0" y="4" width="12" height="1.15" fill="#1e2630"/><rect x="3" y="6" width="9" height="1.15" fill="#1e2630"/><rect x="0" y="8" width="12" height="1.15" fill="#1e2630"/></svg>
<svg class="a" style="left:1100px;top:321px;" width="12" height="10" viewBox="0 0 12 10"><rect x="0" y="0" width="12" height="1.15" fill="#1e2630"/><rect x="0" y="2" width="12" height="1.15" fill="#1e2630"/><rect x="0" y="4" width="12" height="1.15" fill="#1e2630"/><rect x="0" y="6" width="12" height="1.15" fill="#1e2630"/><rect x="0" y="8" width="12" height="1.15" fill="#1e2630"/></svg>
<div class="a" style="left:1017px;top:346px;width:76px;height:31px;background:#f2f2f2;border:1px solid #e2e2e2;border-radius:1px"></div>
<div class="a" style="left:1103px;top:346px;width:54px;height:31px;background:#f2f2f2;border:1px solid #e2e2e2;border-radius:1px"></div>
<svg class="a" style="left:1022px;top:354px;" width="16" height="13" viewBox="0 0 16 13"><circle cx="2.5" cy="3" r="2" fill="#1e3048"/><circle cx="2.5" cy="10" r="2" fill="#1e3048"/><circle cx="2.2" cy="2.6" r="0.7" fill="#8aa8c8"/><circle cx="2.2" cy="9.6" r="0.7" fill="#8aa8c8"/><path d="M6 2.5h8M6 4.5h5M6 9.5h8M6 11.5h5" stroke="#202020" stroke-width="1"/></svg>
<svg class="a" style="left:1047px;top:360px;" width="6" height="3" viewBox="0 0 6 3"><path d="M0 0h6L3 3z" fill="#000"/></svg>
<svg class="a" style="left:1058px;top:354px;" width="16" height="13" viewBox="0 0 16 13"><path d="M1.5 1.5h3M3 1.5v3.5M1.5 5.5h3" stroke="#56789a" stroke-width="1" fill="none"/><path d="M1 8.5h5M2.5 8.5v3.5M4.5 8.5v3.5M1 12.5h5" stroke="#56789a" stroke-width="1" fill="none"/><path d="M8 2.5h8M8 4.5h5M8 9.5h8M8 11.5h5" stroke="#202020" stroke-width="1"/></svg>
<svg class="a" style="left:1082px;top:360px;" width="6" height="3" viewBox="0 0 6 3"><path d="M0 0h6L3 3z" fill="#000"/></svg>
<svg class="a" style="left:1108px;top:353px;" width="30" height="17" viewBox="0 0 30 17"><path d="M0.5 9.5L6 4l5.5 5.5L6 15z" fill="#c0dcf2" stroke="#3a6a98"/><path d="M2.5 9.5l3.5-3.5 3.5 3.5" fill="none" stroke="#e8f4fc"/><path d="M4 6V2.5a2 2 0 0 1 4 0V8" fill="none" stroke="#3a5a78" stroke-width="1"/><path d="M9 3q4 0 4 6l-1 2" fill="none" stroke="#111" stroke-width="1.6"/><rect x="15.5" y="0.5" width="14" height="15" fill="#fafafa" stroke="#4a5a6a"/><rect x="17.5" y="2.5" width="10" height="11" fill="#f4f4f4" stroke="#000" stroke-width="1.6"/></svg>
<svg class="a" style="left:1146px;top:360px;" width="6" height="3" viewBox="0 0 6 3"><path d="M0 0h6L3 3z" fill="#000"/></svg>
<div class="t" style="left:1017.5px;top:380.24px;font-size:12px;line-height:12px;color:#111">A<u>b</u>stand</div>
<div class="t" style="left:1122px;top:380.24px;font-size:12px;line-height:12px;color:#111"><u>E</u>inzug:</div>
<div class="a" style="left:1017px;top:396px;width:54px;height:30px;background:#f2f2f2;border:1px solid #e2e2e2;border-radius:1px"></div>
<div class="a" style="left:1122px;top:396px;width:84px;height:30px;background:#f2f2f2;border:1px solid #e2e2e2;border-radius:1px"></div>
<svg class="a" style="left:1022px;top:403px;" width="16" height="14" viewBox="0 0 16 14"><path d="M1 4l3-3 3 3z" fill="#dbe8f4" stroke="#2a5a90"/><path d="M1 10l3 3 3-3z" fill="#dbe8f4" stroke="#2a5a90"/><path d="M8 2h7M8 4.5h7M8 7h7M8 9.5h7M8 12h7" stroke="#333" stroke-width="1"/></svg>
<svg class="a" style="left:1047px;top:403px;" width="16" height="14" viewBox="0 0 16 14"><path d="M1 1l3 3 3-3z" fill="#dbe8f4" stroke="#2a5a90"/><path d="M1 13l3-3 3 3z" fill="#dbe8f4" stroke="#2a5a90"/><path d="M8 2h7M8 4.5h7M8 7h7M8 9.5h7M8 12h7" stroke="#333" stroke-width="1"/></svg>
<svg class="a" style="left:1127px;top:404px;" width="17" height="14" viewBox="0 0 17 14"><path d="M7 7l-4-4v2.5H0v3h3V11z" fill="#f07a30" stroke="#a83a08" stroke-width="0.8"/><path d="M9 2h7M9 5h7M9 8h7M9 11h7" stroke="#2a78c0" stroke-width="1.3"/><path d="M10 0v14" stroke="#222" stroke-width="0.8"/></svg>
<svg class="a" style="left:1152px;top:404px;" width="17" height="14" viewBox="0 0 17 14"><path d="M0 7l4-4v2.5h3v3H4V11z" fill="#f07a30" stroke="#a83a08" stroke-width="0.8"/><path d="M9 2h7M9 5h7M9 8h7M9 11h7" stroke="#2a78c0" stroke-width="1.3"/><path d="M10 0v14" stroke="#222" stroke-width="0.8"/></svg>
<svg class="a" style="left:1177px;top:402px;" width="17" height="16" viewBox="0 0 17 16"><path d="M6 6l-4-4v2.5H0v3h2V10z" fill="#8ad05a" stroke="#3a8a18" stroke-width="0.8"/><path d="M7 3h4M7 1v4M11 1v4" stroke="#333" stroke-width="0.8"/><path d="M12 2h4M12 5h4M12 8h4M12 11h4M12 14h4" stroke="#5a6a7a" stroke-width="1"/></svg>
<div class="a" style="left:1035px;top:438px;width:81px;height:23px;background:#fafafa;border:1px solid #acacac"></div>
<div class="t" style="left:1037.5px;top:443.84px;font-size:12px;line-height:12px;color:#000">0,00cm</div>
<div class="a" style="left:1099px;top:440px;width:15px;height:19px;background:#e8e8e8;border:1px solid #b0b0b0"></div>
<div class="a" style="left:1100px;top:449px;width:13px;height:1px;background:#b8b8b8"></div>
<svg class="a" style="left:1103px;top:442px;" width="8" height="5" viewBox="0 0 8 5"><path d="M0 4.5L4 0.5 8 4.5z" fill="#111"/></svg>
<svg class="a" style="left:1103px;top:451px;" width="8" height="5" viewBox="0 0 8 5"><path d="M0 0.5L4 4.5 8 0.5z" fill="#111"/></svg>
<div class="a" style="left:1140px;top:438px;width:75px;height:23px;background:#fafafa;border:1px solid #acacac"></div>
<div class="t" style="left:1142.5px;top:443.84px;font-size:12px;line-height:12px;color:#000">0,00cm</div>
<div class="a" style="left:1198px;top:440px;width:15px;height:19px;background:#e8e8e8;border:1px solid #b0b0b0"></div>
<div class="a" style="left:1199px;top:449px;width:13px;height:1px;background:#b8b8b8"></div>
<svg class="a" style="left:1202px;top:442px;" width="8" height="5" viewBox="0 0 8 5"><path d="M0 4.5L4 0.5 8 4.5z" fill="#111"/></svg>
<svg class="a" style="left:1202px;top:451px;" width="8" height="5" viewBox="0 0 8 5"><path d="M0 0.5L4 4.5 8 0.5z" fill="#111"/></svg>
<div class="a" style="left:1035px;top:469px;width:81px;height:23px;background:#fafafa;border:1px solid #acacac"></div>
<div class="t" style="left:1037.5px;top:474.84px;font-size:12px;line-height:12px;color:#000">0,00cm</div>
<div class="a" style="left:1099px;top:471px;width:15px;height:19px;background:#e8e8e8;border:1px solid #b0b0b0"></div>
<div class="a" style="left:1100px;top:480px;width:13px;height:1px;background:#b8b8b8"></div>
<svg class="a" style="left:1103px;top:473px;" width="8" height="5" viewBox="0 0 8 5"><path d="M0 4.5L4 0.5 8 4.5z" fill="#111"/></svg>
<svg class="a" style="left:1103px;top:482px;" width="8" height="5" viewBox="0 0 8 5"><path d="M0 0.5L4 4.5 8 0.5z" fill="#111"/></svg>
<div class="a" style="left:1140px;top:469px;width:75px;height:23px;background:#fafafa;border:1px solid #acacac"></div>
<div class="t" style="left:1142.5px;top:474.84px;font-size:12px;line-height:12px;color:#000">0,00cm</div>
<div class="a" style="left:1198px;top:471px;width:15px;height:19px;background:#e8e8e8;border:1px solid #b0b0b0"></div>
<div class="a" style="left:1199px;top:480px;width:13px;height:1px;background:#b8b8b8"></div>
<svg class="a" style="left:1202px;top:473px;" width="8" height="5" viewBox="0 0 8 5"><path d="M0 4.5L4 0.5 8 4.5z" fill="#111"/></svg>
<svg class="a" style="left:1202px;top:482px;" width="8" height="5" viewBox="0 0 8 5"><path d="M0 0.5L4 4.5 8 0.5z" fill="#111"/></svg>
<div class="a" style="left:1140px;top:501px;width:75px;height:23px;background:#fafafa;border:1px solid #acacac"></div>
<div class="t" style="left:1142.5px;top:506.84px;font-size:12px;line-height:12px;color:#000">0,00cm</div>
<div class="a" style="left:1198px;top:503px;width:15px;height:19px;background:#e8e8e8;border:1px solid #b0b0b0"></div>
<div class="a" style="left:1199px;top:512px;width:13px;height:1px;background:#b8b8b8"></div>
<svg class="a" style="left:1202px;top:505px;" width="8" height="5" viewBox="0 0 8 5"><path d="M0 4.5L4 0.5 8 4.5z" fill="#111"/></svg>
<svg class="a" style="left:1202px;top:514px;" width="8" height="5" viewBox="0 0 8 5"><path d="M0 0.5L4 4.5 8 0.5z" fill="#111"/></svg>
<svg class="a" style="left:1016px;top:443px;" width="15" height="15" viewBox="0 0 15 15"><path d="M5 0.5h4M7 0.5v5M5 5.5h4" stroke="#2a4a6a" stroke-width="0.9"/><path d="M0 8h14M0 10.5h14M0 13h14" stroke="#3a6a98" stroke-width="1.4"/></svg>
<svg class="a" style="left:1121px;top:443px;" width="15" height="15" viewBox="0 0 15 15"><path d="M0 1v4M0 3h5M5 1v4" stroke="#2a4a6a" stroke-width="0.9"/><path d="M8 2h6M9 5h5M9 8h5M9 11h5M9 14h5" stroke="#3a6a98" stroke-width="1.4"/></svg>
<svg class="a" style="left:1016px;top:474px;" width="15" height="15" viewBox="0 0 15 15"><path d="M0 1h14M0 3.5h14M0 6h14" stroke="#3a6a98" stroke-width="1.4"/><path d="M5 9h4M7 9v5M5 14h4" stroke="#2a4a6a" stroke-width="0.9"/></svg>
<svg class="a" style="left:1121px;top:474px;" width="15" height="15" viewBox="0 0 15 15"><path d="M9 1v4M9 3h5M14 1v4" stroke="#2a4a6a" stroke-width="0.9"/><path d="M0 2h6M0 5h5M0 8h5M0 11h5M0 14h5" stroke="#3a6a98" stroke-width="1.4"/></svg>
<svg class="a" style="left:1121px;top:506px;" width="15" height="15" viewBox="0 0 15 15"><path d="M0 1v4M0 3h5M5 1v4" stroke="#2a4a6a" stroke-width="0.9"/><path d="M7 2h7M0 6h14M0 9h14M0 12h14" stroke="#3a6a98" stroke-width="1.4"/></svg>
<div class="a" style="left:1017px;top:499px;width:41px;height:31px;background:#f2f2f2;border:1px solid #e2e2e2;border-radius:1px"></div>
<svg class="a" style="left:1021px;top:507px;" width="16" height="13" viewBox="0 0 16 13"><path d="M3 1v12" stroke="#2a4a6a" stroke-width="1.2"/><path d="M0 4l3-3 3 3M0 10l3 3 3-3" stroke="#2a4a6a" stroke-width="1.2" fill="none"/><path d="M8 3h8M8 7h8M8 11h8" stroke="#3a6a98" stroke-width="1.6"/></svg>
<svg class="a" style="left:1047px;top:512px;" width="6" height="3" viewBox="0 0 6 3"><path d="M0 0h6L3 3z" fill="#000"/></svg>
<div class="a" style="left:1010px;top:539px;width:212px;height:27px;background:linear-gradient(#e0e0e0,#e9e9e9 60%,#ececec)"></div>
<svg class="a" style="left:1016px;top:548px;" width="9" height="9" viewBox="0 0 9 9"><rect x="0.5" y="0.5" width="8" height="8" fill="#f8fafc" stroke="#4a5a6a"/><path d="M2 4.5h5M4.5 2v5" stroke="#1a2a3a" stroke-width="1.2"/></svg>
<div class="t" style="left:1030.5px;top:548.34px;font-size:12px;line-height:12px;font-weight:bold;color:#1a1a1a">Seite</div>
<svg class="a" style="left:1205px;top:544px;" width="12" height="11" viewBox="0 0 12 11"><rect x="0.5" y="0.5" width="11" height="10" fill="#fafcfe" stroke="#3a5a80"/><rect x="1" y="1" width="10" height="2" fill="#9cc4ec"/><path d="M3 7.5h1.2M5.4 7.5h1.2M7.8 7.5h1.2" stroke="#1a2a48"/></svg>
<div class="a" style="left:1010px;top:566px;width:212px;height:1px;background:#f4f4f4"></div>
<div class="a" style="left:1010px;top:567px;width:212px;height:192px;background:#ececec;border:1px solid #e4e4e4"></div>
<svg class="a" style="left:1001px;top:420px;" width="4" height="36" viewBox="0 0 4 36"><path d="M0.5 0.5l2.5 2.5-2.5 2.5z M0.5 31l2.5 2.5-2.5 2.5z" fill="#555"/><rect x="1" y="9" width="1.5" height="1.5" fill="#777"/><rect x="1" y="13" width="1.5" height="1.5" fill="#777"/><rect x="1" y="17" width="1.5" height="1.5" fill="#777"/><rect x="1" y="21" width="1.5" height="1.5" fill="#777"/><rect x="1" y="25" width="1.5" height="1.5" fill="#777"/></svg>
<div class="a" style="left:1222px;top:117px;width:39px;height:645px;background:#f0f0f0"></div>
<div class="a" style="left:1261px;top:117px;width:1px;height:645px;background:#b8b8b8"></div>
<svg class="a" style="left:1238px;top:131px;" width="11" height="11" viewBox="0 0 11 11"><path d="M0 1.5h6M0 3.5h6M0 5.5h6" stroke="#222" stroke-width="1"/><path d="M4 7h6L7 10z" fill="#111"/></svg>
<div class="a" style="left:1230px;top:155px;width:25px;height:1px;background:#dcdcdc"></div>
<div class="a" style="left:1226px;top:159px;width:32px;height:32px;background:#f2f2f2;border:1px solid #9c9c9c;border-radius:3px"></div>
<svg class="a" style="left:1232px;top:163px;" width="21" height="23" viewBox="0 0 21 23"><ellipse cx="10.5" cy="21.5" rx="8" ry="1.5" fill="#000" opacity="0.12"/><path d="M0 4.5L10 9V20L0 15.5z" fill="#1e8ee0"/><path d="M10 9L20 4.5V15.5L10 20z" fill="#7cc830"/><path d="M10 0L20 4.5 10 9 0 4.5z" fill="#9ad860"/><path d="M10 0L0 4.5 5 6.75 15 2.25z" fill="#48b4f4"/><path d="M0 10L10 14.5 20 10M5 6.75V17.75M15 6.75V17.75M5 2.25L15 6.75M15 2.25L5 6.75" stroke="#e8f4fc" stroke-width="0.9" fill="none"/></svg>
<svg class="a" style="left:1230px;top:197px;" width="25" height="24" viewBox="0 0 25 24"><ellipse cx="12" cy="22" rx="9" ry="1.5" fill="#000" opacity="0.12"/><path d="M2 20L7 6l10 9z" fill="#1a6ad0"/><circle cx="13" cy="11" r="6" fill="#1a2a44"/><path d="M11 9q3-3 6 0" stroke="#4a8ad8" stroke-width="1.2" fill="none"/><path d="M11 15q5-3 9 0q-2 5-8 3z" fill="#5ab040"/><path d="M2 7q3-5 8-3" stroke="#d8702a" stroke-width="3.2" fill="none"/><path d="M19 1l1.2 2.4 2.6.4-1.9 1.8.5 2.6-2.4-1.2-2.4 1.2.5-2.6-1.9-1.8 2.6-.4z" fill="#f8d040"/><path d="M3 9l.9 1.8 2 .3-1.4 1.4.3 2-1.8-.9-1.8.9.3-2L.1 11.1l2-.3z" fill="#e860c0"/><path d="M21 10l.9 1.8 2 .3-1.4 1.4.3 2-1.8-.9-1.8.9.3-2-1.4-1.4 2-.3z" fill="#e84870"/><path d="M12 0l.8 1.6 1.8.3-1.3 1.2.3 1.8-1.6-.8-1.6.8.3-1.8-1.3-1.2 1.8-.3z" fill="#b060e8"/></svg>
<svg class="a" style="left:1230px;top:233px;" width="24" height="22" viewBox="0 0 24 22"><ellipse cx="12" cy="20.5" rx="9" ry="1.5" fill="#000" opacity="0.12"/><path d="M1 9L18 2l5 11-17 7z" fill="#fafafa" stroke="#a8b0b8" stroke-width="0.8"/><path d="M3.5 9.5l13-5.5 3.5 8-13 5.5z" fill="#6ab8f0"/><path d="M7 17l13-5.5-1.5-3.5-5 3-3-1-5 4z" fill="#5aa838"/><path d="M6 13l3-4 4 2v3l-5 2z" fill="#f4f4f4" stroke="#2a5a90" stroke-width="0.9"/><path d="M0 6l2 6 1.5-.6" fill="none" stroke="#6ab040" stroke-width="1.5"/></svg>
<svg class="a" style="left:1231px;top:268px;" width="22" height="24" viewBox="0 0 22 24"><ellipse cx="11" cy="22" rx="8" ry="1.3" fill="#000" opacity="0.12"/><circle cx="11" cy="11.5" r="10" fill="#f2a828"/><circle cx="11" cy="11.5" r="7.3" fill="#fbfbfb"/><path d="M15.5 6.5l-3.2 6.2-5.8 3.8 3.2-6.2z" fill="#2a6ad0"/><path d="M15.5 6.5l-3.2 6.2-2.6-2.4z" fill="#e03030"/><path d="M6.5 16.5l3.2-6.2 2.6 2.4z" fill="#e03030" opacity="0.0"/><text x="11" y="6.8" font-size="5.5" font-weight="bold" fill="#222" text-anchor="middle" font-family="Liberation Sans">N</text></svg>
<div class="t" style="left:40px;top:743px;font-size:9px;line-height:10px;font-weight:bold;color:#dadada;letter-spacing:0.3px">blog</div>
<svg class="a" style="left:987px;top:125px;" width="9" height="6" viewBox="0 0 9 6"><path d="M1 5l3.5-3.5L8 5" stroke="#555" stroke-width="1.8" fill="none"/></svg>
<svg class="a" style="left:987px;top:682px;" width="9" height="6" viewBox="0 0 9 6"><path d="M1 1l3.5 3.5L8 1" stroke="#555" stroke-width="1.8" fill="none"/></svg>
<div class="a" style="left:983px;top:694px;width:15px;height:15px;background:#f0f0f0;border:1px solid #a8a8a8"></div>
<div class="a" style="left:983px;top:711px;width:15px;height:15px;background:#f0f0f0;border:1px solid #a8a8a8"></div>
<div class="a" style="left:983px;top:728px;width:15px;height:15px;background:#f0f0f0;border:1px solid #a8a8a8"></div>
<svg class="a" style="left:986px;top:697px;" width="9" height="9" viewBox="0 0 9 9"><path d="M0.5 4.5L4.5 0.5 8.5 4.5z M0.5 8.5L4.5 4.5 8.5 8.5z" fill="#000"/></svg>
<svg class="a" style="left:986px;top:714px;" width="9" height="9" viewBox="0 0 9 9"><circle cx="4.5" cy="4.5" r="3.8" fill="#6a90b8" stroke="#3a5a80" stroke-width="1"/><circle cx="4" cy="3.8" r="1.6" fill="#a8c8e8"/></svg>
<svg class="a" style="left:986px;top:731px;" width="9" height="9" viewBox="0 0 9 9"><path d="M0.5 0.5L4.5 4.5 8.5 0.5z M0.5 4.5L4.5 8.5 8.5 4.5z" fill="#000"/></svg>
<svg class="a" style="left:15px;top:749px;" width="7" height="9" viewBox="0 0 7 9"><path d="M5.5 1L1.5 4.5 5.5 8" stroke="#555" stroke-width="1.8" fill="none"/></svg>
<svg class="a" style="left:970px;top:749px;" width="7" height="9" viewBox="0 0 7 9"><path d="M1.5 1L5.5 4.5 1.5 8" stroke="#555" stroke-width="1.8" fill="none"/></svg>
<div class="a" style="left:8px;top:761px;width:993px;height:1px;background:#d8d8d8"></div>
<div class="a" style="left:1000px;top:761px;width:262px;height:1px;background:#a8a8a8"></div>
<div class="a" style="left:8px;top:762px;width:1254px;height:22px;background:#ececec"></div>
<div class="a" style="left:193px;top:766px;width:1px;height:16px;background:#bcbcbc"></div>
<div class="a" style="left:194px;top:766px;width:1px;height:16px;background:#fafafa"></div>
<div class="a" style="left:369px;top:766px;width:1px;height:16px;background:#bcbcbc"></div>
<div class="a" style="left:370px;top:766px;width:1px;height:16px;background:#fafafa"></div>
<div class="a" style="left:618px;top:766px;width:1px;height:16px;background:#bcbcbc"></div>
<div class="a" style="left:619px;top:766px;width:1px;height:16px;background:#fafafa"></div>
<div class="a" style="left:663px;top:766px;width:1px;height:16px;background:#bcbcbc"></div>
<div class="a" style="left:664px;top:766px;width:1px;height:16px;background:#fafafa"></div>
<div class="a" style="left:697px;top:766px;width:1px;height:16px;background:#bcbcbc"></div>
<div class="a" style="left:698px;top:766px;width:1px;height:16px;background:#fafafa"></div>
<div class="a" style="left:713px;top:766px;width:1px;height:16px;background:#bcbcbc"></div>
<div class="a" style="left:714px;top:766px;width:1px;height:16px;background:#fafafa"></div>
<div class="a" style="left:742px;top:766px;width:1px;height:16px;background:#bcbcbc"></div>
<div class="a" style="left:743px;top:766px;width:1px;height:16px;background:#fafafa"></div>
<div class="a" style="left:1000px;top:766px;width:1px;height:16px;background:#bcbcbc"></div>
<div class="a" style="left:1001px;top:766px;width:1px;height:16px;background:#fafafa"></div>
<div class="a" style="left:1076px;top:766px;width:1px;height:16px;background:#bcbcbc"></div>
<div class="a" style="left:1077px;top:766px;width:1px;height:16px;background:#fafafa"></div>
<div class="a" style="left:1219px;top:766px;width:1px;height:16px;background:#bcbcbc"></div>
<div class="a" style="left:1220px;top:766px;width:1px;height:16px;background:#fafafa"></div>
<div class="t" style="left:18px;top:769.43px;font-size:11.3px;line-height:11.3px;color:#111">Seite 1 / 1</div>
<div class="t" style="left:199px;top:769.43px;font-size:11.3px;line-height:11.3px;color:#111">Standard</div>
<div class="t" style="left:476px;top:769.43px;font-size:11.3px;line-height:11.3px;color:#111">Latein</div>
<div class="t" style="left:623px;top:769.43px;font-size:11.3px;line-height:11.3px;color:#111">EINFG</div>
<div class="t" style="left:668px;top:769.43px;font-size:11.3px;line-height:11.3px;color:#111">STD</div>
<div class="t" style="left:700.5px;top:769.43px;font-size:11.3px;line-height:11.3px;color:#111">*</div>
<div class="t" style="left:1224.5px;top:769.43px;font-size:11.3px;line-height:11.3px;color:#111">100%</div>
<svg class="a" style="left:1008px;top:768px;" width="10" height="11" viewBox="0 0 10 11"><path d="M0.5 0.5h6l3 3v7h-9z" fill="#fafafa" stroke="#8a9aa8"/><path d="M6.5 0.5v3h3" fill="none" stroke="#8a9aa8"/></svg>
<svg class="a" style="left:1023px;top:768px;" width="20" height="11" viewBox="0 0 20 11"><path d="M0.5 0.5h6l3 3v7h-9z" fill="#e4eef8" stroke="#2e5a8a"/><path d="M10.5 0.5h6l3 3v7h-9z" fill="#e4eef8" stroke="#2e5a8a"/></svg>
<svg class="a" style="left:1048px;top:768px;" width="18" height="11" viewBox="0 0 18 11"><path d="M0.5 1.5l8-1v10l-8 0z" fill="#fafafa" stroke="#8a9aa8"/><path d="M8.5 0.5h8v10h-8z" fill="#fafafa" stroke="#8a9aa8"/></svg>
<svg class="a" style="left:1081px;top:769px;" width="13" height="12" viewBox="0 0 13 12"><circle cx="6" cy="6" r="5.3" fill="#e6eef6" stroke="#3a5a80" stroke-width="1.2"/><path d="M3 6h6" stroke="#1a3a60" stroke-width="1.4"/></svg>
<div class="a" style="left:1098px;top:774px;width:97px;height:1px;background:#8a8a8a"></div>
<div class="a" style="left:1115px;top:771px;width:1px;height:7px;background:#8a8a8a"></div>
<svg class="a" style="left:1142px;top:771px;" width="9" height="9" viewBox="0 0 9 9"><circle cx="4.5" cy="4.5" r="3.8" fill="#6a8aa8" stroke="#3a5a78" stroke-width="1"/></svg>
<svg class="a" style="left:1199px;top:769px;" width="13" height="12" viewBox="0 0 13 12"><circle cx="6" cy="6" r="5.3" fill="#e6eef6" stroke="#3a5a80" stroke-width="1.2"/><path d="M3 6h6M6 3v6" stroke="#1a3a60" stroke-width="1.4"/></svg>
</body></html>
